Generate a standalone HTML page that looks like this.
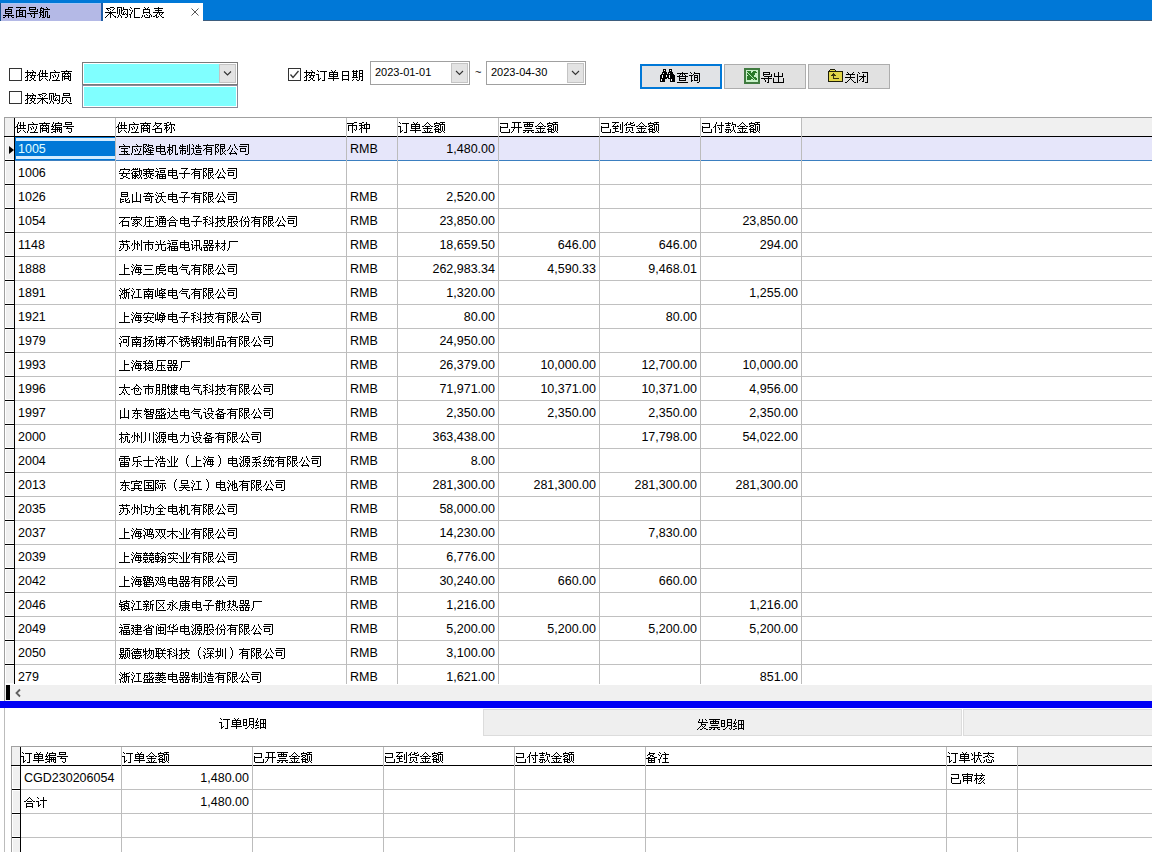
<!DOCTYPE html>
<html><head><meta charset="utf-8"><style>
html,body{margin:0;padding:0;width:1152px;height:852px;overflow:hidden;background:#fff;}
body{position:relative;font-family:"Liberation Sans",sans-serif;color:#000;}
div,svg{position:absolute;}
.t{position:absolute;white-space:nowrap;line-height:14px;font-size:12px;}
</style></head><body>
<div style="left:0px;top:0px;width:1152px;height:21px;background:#0078d7"></div>
<div style="left:0px;top:3px;width:1px;height:18px;background:#1a4f8a"></div>
<div style="left:1px;top:3px;width:100px;height:18px;background:#b4b9e6"></div>
<div style="left:101px;top:3px;width:2px;height:18px;background:#1f5fa8"></div>
<div style="left:103px;top:3px;width:100px;height:18px;background:#fff"></div>
<div style="left:203px;top:20px;width:949px;height:1px;background:#3d5d7e"></div>
<div style="left:1px;top:3px;width:100px;height:1px;background:#a6c6f6"></div>
<svg style="position:absolute;left:190px;top:7px" width="10" height="10"><path d="M1.5 1.5L8.5 8.5M8.5 1.5L1.5 8.5" stroke="#555" stroke-width="1"/></svg>
<div style="left:9px;top:68px;width:13px;height:13px;border:1px solid #333;box-sizing:border-box;background:#fff"></div>
<div style="left:9px;top:91px;width:13px;height:13px;border:1px solid #333;box-sizing:border-box;background:#fff"></div>
<div style="left:288px;top:68px;width:13px;height:13px;border:1px solid #333;box-sizing:border-box;background:#fff"></div>
<svg style="position:absolute;left:288px;top:68px" width="13" height="13"><path d="M2.5 6.5L5 9.5L10.5 3" fill="none" stroke="#333" stroke-width="1.3"/></svg>
<div style="left:82px;top:62px;width:156px;height:23px;border:1px solid #7a7a7a;box-sizing:border-box;background:#fff"></div>
<div style="left:84px;top:64px;width:135px;height:19px;background:#80ffff"></div>
<div style="left:219px;top:64px;width:17px;height:19px;background:#e3e3e3;border:1px solid #c4c4c4;box-sizing:border-box"></div>
<svg style="position:absolute;left:219px;top:64px" width="17" height="19"><path d="M5.0 7.5L8.5 11.0L12.0 7.5" fill="none" stroke="#333" stroke-width="1.1"/></svg>
<div style="left:82px;top:85px;width:156px;height:23px;border:1px solid #8a8a9a;box-sizing:border-box;background:#fff"></div>
<div style="left:84px;top:87px;width:152px;height:19px;background:#80ffff"></div>
<div style="left:370px;top:61px;width:100px;height:24px;border:1px solid #a0a0a0;box-sizing:border-box;background:#fff"></div>
<div style="left:451px;top:63px;width:17px;height:20px;background:#e3e3e3;border:1px solid #c4c4c4;box-sizing:border-box"></div>
<svg style="position:absolute;left:451px;top:63px" width="17" height="20"><path d="M5.0 8.0L8.5 11.5L12.0 8.0" fill="none" stroke="#333" stroke-width="1.1"/></svg>
<span class="t" style="left:375px;top:65px;font-size:11px">2023-01-01</span>
<span class="t" style="left:475px;top:65px;font-size:11px">~</span>
<div style="left:486px;top:61px;width:100px;height:24px;border:1px solid #a0a0a0;box-sizing:border-box;background:#fff"></div>
<div style="left:567px;top:63px;width:17px;height:20px;background:#e3e3e3;border:1px solid #c4c4c4;box-sizing:border-box"></div>
<svg style="position:absolute;left:567px;top:63px" width="17" height="20"><path d="M5.0 8.0L8.5 11.5L12.0 8.0" fill="none" stroke="#333" stroke-width="1.1"/></svg>
<span class="t" style="left:491px;top:65px;font-size:11px">2023-04-30</span>
<div style="left:640px;top:64px;width:82px;height:25px;border:2px solid #0078d7;box-sizing:border-box;background:#e1e3e6"></div>
<svg style="position:absolute;left:660px;top:69px" width="15" height="13" shape-rendering="crispEdges"><path fill="#000" d="M3 0h3v1h-3zM9 0h3v1h-3zM3 1h1v1h-1zM5 1h1v1h-1zM9 1h1v1h-1zM11 1h1v1h-1zM3 2h3v1h-3zM9 2h3v1h-3zM2 3h5v1h-5zM8 3h5v1h-5zM2 4h1v1h-1zM4 4h3v1h-3zM8 4h1v1h-1zM10 4h3v1h-3zM1 5h13v1h-13zM0 6h2v1h-2zM3 6h3v1h-3zM7 6h2v1h-2zM10 6h5v1h-5zM0 7h2v1h-2zM3 7h3v1h-3zM7 7h2v1h-2zM10 7h5v1h-5zM0 8h2v1h-2zM3 8h6v1h-6zM10 8h5v1h-5zM0 9h7v1h-7zM8 9h7v1h-7zM0 10h1v1h-1zM2 10h3v1h-3zM10 10h1v1h-1zM12 10h3v1h-3zM0 11h1v1h-1zM2 11h3v1h-3zM10 11h1v1h-1zM12 11h3v1h-3zM0 12h5v1h-5zM10 12h5v1h-5z"/><path fill="#fff" d="M4 1h1v1h-1zM10 1h1v1h-1zM3 4h1v1h-1zM9 4h1v1h-1zM2 6h1v1h-1zM6 6h1v1h-1zM9 6h1v1h-1zM2 7h1v1h-1zM6 7h1v1h-1zM9 7h1v1h-1zM2 8h1v1h-1zM9 8h1v1h-1zM7 9h1v1h-1zM1 10h1v1h-1zM11 10h1v1h-1zM1 11h1v1h-1zM11 11h1v1h-1z"/></svg>
<div style="left:724px;top:64px;width:82px;height:25px;border:1px solid #adadad;box-sizing:border-box;background:#e1e1e1"></div>
<svg style="position:absolute;left:744px;top:68px" width="16" height="16" shape-rendering="crispEdges"><path fill="#3f7a3f" d="M0 0h16v1h-16zM0 1h16v1h-16zM0 2h2v1h-2zM14 2h2v1h-2zM0 3h2v1h-2zM14 3h2v1h-2zM0 4h2v1h-2zM14 4h2v1h-2zM0 5h2v1h-2zM14 5h2v1h-2zM0 6h2v1h-2zM14 6h2v1h-2zM0 7h2v1h-2zM14 7h2v1h-2zM0 8h2v1h-2zM14 8h2v1h-2zM0 9h2v1h-2zM14 9h2v1h-2zM0 10h2v1h-2zM14 10h2v1h-2zM0 11h2v1h-2zM14 11h2v1h-2zM0 12h2v1h-2zM14 12h2v1h-2zM0 13h2v1h-2zM14 13h2v1h-2zM0 14h16v1h-16zM0 15h16v1h-16z"/><path fill="#c8f0c8" d="M2 2h12v1h-12zM2 3h1v1h-1zM7 3h2v1h-2zM12 3h2v1h-2zM2 4h1v1h-1zM7 4h1v1h-1zM13 4h1v1h-1zM2 5h1v1h-1zM11 5h3v1h-3zM2 6h1v1h-1zM11 6h3v1h-3zM2 7h2v1h-2zM10 7h4v1h-4zM2 8h1v1h-1zM10 8h4v1h-4zM2 9h1v1h-1zM12 9h2v1h-2zM2 10h1v1h-1zM13 10h1v1h-1zM2 11h1v1h-1zM7 11h2v1h-2zM13 11h1v1h-1zM2 12h12v1h-12zM2 13h12v1h-12z"/><path fill="#2a7a2a" d="M3 3h4v1h-4zM9 3h3v1h-3zM4 4h3v1h-3zM8 4h5v1h-5zM3 5h1v1h-1zM5 5h6v1h-6zM3 6h2v1h-2zM6 6h5v1h-5zM4 7h2v1h-2zM7 7h3v1h-3zM3 8h4v1h-4zM8 8h2v1h-2zM3 9h5v1h-5zM9 9h3v1h-3zM3 10h6v1h-6zM10 10h3v1h-3zM3 11h4v1h-4zM9 11h1v1h-1zM11 11h2v1h-2z"/><path fill="#b0e8b0" d="M3 4h1v1h-1zM4 5h1v1h-1zM5 6h1v1h-1zM6 7h1v1h-1zM7 8h1v1h-1zM8 9h1v1h-1zM9 10h1v1h-1zM10 11h1v1h-1z"/></svg>
<div style="left:808px;top:64px;width:82px;height:25px;border:1px solid #adadad;box-sizing:border-box;background:#e1e1e1"></div>
<svg style="position:absolute;left:828px;top:69px" width="15" height="13" shape-rendering="crispEdges"><path fill="#1e1e08" d="M2 0h5v1h-5zM1 1h1v1h-1zM7 1h1v1h-1zM0 2h15v1h-15zM0 3h1v1h-1zM14 3h1v1h-1zM0 4h1v1h-1zM14 4h1v1h-1zM0 5h1v1h-1zM14 5h1v1h-1zM0 6h1v1h-1zM14 6h1v1h-1zM0 7h1v1h-1zM14 7h1v1h-1zM0 8h1v1h-1zM14 8h1v1h-1zM0 9h1v1h-1zM14 9h1v1h-1zM0 10h1v1h-1zM14 10h1v1h-1zM0 11h1v1h-1zM14 11h1v1h-1zM0 12h15v1h-15z"/><path fill="#e2d648" d="M2 1h5v1h-5zM1 3h13v1h-13zM1 4h4v1h-4zM6 4h8v1h-8zM1 5h3v1h-3zM7 5h7v1h-7zM1 6h2v1h-2zM8 6h6v1h-6zM1 7h4v1h-4zM6 7h8v1h-8zM1 8h4v1h-4zM6 8h8v1h-8zM1 9h4v1h-4zM11 9h3v1h-3zM1 10h13v1h-13zM1 11h13v1h-13z"/><path fill="#3a3410" d="M5 4h1v1h-1zM4 5h3v1h-3zM3 6h5v1h-5zM5 7h1v1h-1zM5 8h1v1h-1zM5 9h6v1h-6z"/></svg>
<div style="left:4px;top:117px;width:1148px;height:1px;background:#a0a0a0"></div>
<div style="left:4px;top:117px;width:1px;height:584px;background:#a0a0a0"></div>
<div style="left:5px;top:118px;width:9px;height:18px;background:#f0f0f0"></div>
<div style="left:802px;top:118px;width:350px;height:18px;background:#f0f0f0"></div>
<div style="left:4px;top:136px;width:1148px;height:1px;background:#000"></div>
<div style="left:5px;top:137px;width:9px;height:23px;background:#f0f0f0;border:1px solid #fff;border-right:0;box-sizing:border-box"></div>
<div style="left:5px;top:160px;width:9px;height:1px;background:#000"></div>
<div style="left:15px;top:160px;width:1137px;height:1px;background:#3b7fc0"></div>
<div style="left:15px;top:137px;width:1137px;height:23px;background:#e6e6fa"></div>
<div style="left:15px;top:137px;width:100px;height:23px;background:#0078d7"></div>
<div style="left:16px;top:138px;width:99px;height:3px;background:#d4ecff"></div>
<div style="left:16px;top:156px;width:99px;height:3px;background:#d4ecff"></div>
<span class="t" style="left:18px;top:142px;font-size:12.5px;color:#e0ffff">1005</span>
<span class="t" style="left:350px;top:142px;font-size:12.5px">RMB</span>
<span class="t" style="right:657px;top:142px;font-size:12.5px">1,480.00</span>
<div style="left:5px;top:161px;width:9px;height:23px;background:#f0f0f0;border:1px solid #fff;border-right:0;box-sizing:border-box"></div>
<div style="left:5px;top:184px;width:9px;height:1px;background:#000"></div>
<div style="left:15px;top:184px;width:1137px;height:1px;background:#c0c0c0"></div>
<span class="t" style="left:18px;top:166px;font-size:12.5px">1006</span>
<div style="left:5px;top:185px;width:9px;height:23px;background:#f0f0f0;border:1px solid #fff;border-right:0;box-sizing:border-box"></div>
<div style="left:5px;top:208px;width:9px;height:1px;background:#000"></div>
<div style="left:15px;top:208px;width:1137px;height:1px;background:#c0c0c0"></div>
<span class="t" style="left:18px;top:190px;font-size:12.5px">1026</span>
<span class="t" style="left:350px;top:190px;font-size:12.5px">RMB</span>
<span class="t" style="right:657px;top:190px;font-size:12.5px">2,520.00</span>
<div style="left:5px;top:209px;width:9px;height:23px;background:#f0f0f0;border:1px solid #fff;border-right:0;box-sizing:border-box"></div>
<div style="left:5px;top:232px;width:9px;height:1px;background:#000"></div>
<div style="left:15px;top:232px;width:1137px;height:1px;background:#c0c0c0"></div>
<span class="t" style="left:18px;top:214px;font-size:12.5px">1054</span>
<span class="t" style="left:350px;top:214px;font-size:12.5px">RMB</span>
<span class="t" style="right:657px;top:214px;font-size:12.5px">23,850.00</span>
<span class="t" style="right:354px;top:214px;font-size:12.5px">23,850.00</span>
<div style="left:5px;top:233px;width:9px;height:23px;background:#f0f0f0;border:1px solid #fff;border-right:0;box-sizing:border-box"></div>
<div style="left:5px;top:256px;width:9px;height:1px;background:#000"></div>
<div style="left:15px;top:256px;width:1137px;height:1px;background:#c0c0c0"></div>
<span class="t" style="left:18px;top:238px;font-size:12.5px">1148</span>
<span class="t" style="left:350px;top:238px;font-size:12.5px">RMB</span>
<span class="t" style="right:657px;top:238px;font-size:12.5px">18,659.50</span>
<span class="t" style="right:556px;top:238px;font-size:12.5px">646.00</span>
<span class="t" style="right:455px;top:238px;font-size:12.5px">646.00</span>
<span class="t" style="right:354px;top:238px;font-size:12.5px">294.00</span>
<div style="left:5px;top:257px;width:9px;height:23px;background:#f0f0f0;border:1px solid #fff;border-right:0;box-sizing:border-box"></div>
<div style="left:5px;top:280px;width:9px;height:1px;background:#000"></div>
<div style="left:15px;top:280px;width:1137px;height:1px;background:#c0c0c0"></div>
<span class="t" style="left:18px;top:262px;font-size:12.5px">1888</span>
<span class="t" style="left:350px;top:262px;font-size:12.5px">RMB</span>
<span class="t" style="right:657px;top:262px;font-size:12.5px">262,983.34</span>
<span class="t" style="right:556px;top:262px;font-size:12.5px">4,590.33</span>
<span class="t" style="right:455px;top:262px;font-size:12.5px">9,468.01</span>
<div style="left:5px;top:281px;width:9px;height:23px;background:#f0f0f0;border:1px solid #fff;border-right:0;box-sizing:border-box"></div>
<div style="left:5px;top:304px;width:9px;height:1px;background:#000"></div>
<div style="left:15px;top:304px;width:1137px;height:1px;background:#c0c0c0"></div>
<span class="t" style="left:18px;top:286px;font-size:12.5px">1891</span>
<span class="t" style="left:350px;top:286px;font-size:12.5px">RMB</span>
<span class="t" style="right:657px;top:286px;font-size:12.5px">1,320.00</span>
<span class="t" style="right:354px;top:286px;font-size:12.5px">1,255.00</span>
<div style="left:5px;top:305px;width:9px;height:23px;background:#f0f0f0;border:1px solid #fff;border-right:0;box-sizing:border-box"></div>
<div style="left:5px;top:328px;width:9px;height:1px;background:#000"></div>
<div style="left:15px;top:328px;width:1137px;height:1px;background:#c0c0c0"></div>
<span class="t" style="left:18px;top:310px;font-size:12.5px">1921</span>
<span class="t" style="left:350px;top:310px;font-size:12.5px">RMB</span>
<span class="t" style="right:657px;top:310px;font-size:12.5px">80.00</span>
<span class="t" style="right:455px;top:310px;font-size:12.5px">80.00</span>
<div style="left:5px;top:329px;width:9px;height:23px;background:#f0f0f0;border:1px solid #fff;border-right:0;box-sizing:border-box"></div>
<div style="left:5px;top:352px;width:9px;height:1px;background:#000"></div>
<div style="left:15px;top:352px;width:1137px;height:1px;background:#c0c0c0"></div>
<span class="t" style="left:18px;top:334px;font-size:12.5px">1979</span>
<span class="t" style="left:350px;top:334px;font-size:12.5px">RMB</span>
<span class="t" style="right:657px;top:334px;font-size:12.5px">24,950.00</span>
<div style="left:5px;top:353px;width:9px;height:23px;background:#f0f0f0;border:1px solid #fff;border-right:0;box-sizing:border-box"></div>
<div style="left:5px;top:376px;width:9px;height:1px;background:#000"></div>
<div style="left:15px;top:376px;width:1137px;height:1px;background:#c0c0c0"></div>
<span class="t" style="left:18px;top:358px;font-size:12.5px">1993</span>
<span class="t" style="left:350px;top:358px;font-size:12.5px">RMB</span>
<span class="t" style="right:657px;top:358px;font-size:12.5px">26,379.00</span>
<span class="t" style="right:556px;top:358px;font-size:12.5px">10,000.00</span>
<span class="t" style="right:455px;top:358px;font-size:12.5px">12,700.00</span>
<span class="t" style="right:354px;top:358px;font-size:12.5px">10,000.00</span>
<div style="left:5px;top:377px;width:9px;height:23px;background:#f0f0f0;border:1px solid #fff;border-right:0;box-sizing:border-box"></div>
<div style="left:5px;top:400px;width:9px;height:1px;background:#000"></div>
<div style="left:15px;top:400px;width:1137px;height:1px;background:#c0c0c0"></div>
<span class="t" style="left:18px;top:382px;font-size:12.5px">1996</span>
<span class="t" style="left:350px;top:382px;font-size:12.5px">RMB</span>
<span class="t" style="right:657px;top:382px;font-size:12.5px">71,971.00</span>
<span class="t" style="right:556px;top:382px;font-size:12.5px">10,371.00</span>
<span class="t" style="right:455px;top:382px;font-size:12.5px">10,371.00</span>
<span class="t" style="right:354px;top:382px;font-size:12.5px">4,956.00</span>
<div style="left:5px;top:401px;width:9px;height:23px;background:#f0f0f0;border:1px solid #fff;border-right:0;box-sizing:border-box"></div>
<div style="left:5px;top:424px;width:9px;height:1px;background:#000"></div>
<div style="left:15px;top:424px;width:1137px;height:1px;background:#c0c0c0"></div>
<span class="t" style="left:18px;top:406px;font-size:12.5px">1997</span>
<span class="t" style="left:350px;top:406px;font-size:12.5px">RMB</span>
<span class="t" style="right:657px;top:406px;font-size:12.5px">2,350.00</span>
<span class="t" style="right:556px;top:406px;font-size:12.5px">2,350.00</span>
<span class="t" style="right:455px;top:406px;font-size:12.5px">2,350.00</span>
<span class="t" style="right:354px;top:406px;font-size:12.5px">2,350.00</span>
<div style="left:5px;top:425px;width:9px;height:23px;background:#f0f0f0;border:1px solid #fff;border-right:0;box-sizing:border-box"></div>
<div style="left:5px;top:448px;width:9px;height:1px;background:#000"></div>
<div style="left:15px;top:448px;width:1137px;height:1px;background:#c0c0c0"></div>
<span class="t" style="left:18px;top:430px;font-size:12.5px">2000</span>
<span class="t" style="left:350px;top:430px;font-size:12.5px">RMB</span>
<span class="t" style="right:657px;top:430px;font-size:12.5px">363,438.00</span>
<span class="t" style="right:455px;top:430px;font-size:12.5px">17,798.00</span>
<span class="t" style="right:354px;top:430px;font-size:12.5px">54,022.00</span>
<div style="left:5px;top:449px;width:9px;height:23px;background:#f0f0f0;border:1px solid #fff;border-right:0;box-sizing:border-box"></div>
<div style="left:5px;top:472px;width:9px;height:1px;background:#000"></div>
<div style="left:15px;top:472px;width:1137px;height:1px;background:#c0c0c0"></div>
<span class="t" style="left:18px;top:454px;font-size:12.5px">2004</span>
<span class="t" style="left:350px;top:454px;font-size:12.5px">RMB</span>
<span class="t" style="right:657px;top:454px;font-size:12.5px">8.00</span>
<div style="left:5px;top:473px;width:9px;height:23px;background:#f0f0f0;border:1px solid #fff;border-right:0;box-sizing:border-box"></div>
<div style="left:5px;top:496px;width:9px;height:1px;background:#000"></div>
<div style="left:15px;top:496px;width:1137px;height:1px;background:#c0c0c0"></div>
<span class="t" style="left:18px;top:478px;font-size:12.5px">2013</span>
<span class="t" style="left:350px;top:478px;font-size:12.5px">RMB</span>
<span class="t" style="right:657px;top:478px;font-size:12.5px">281,300.00</span>
<span class="t" style="right:556px;top:478px;font-size:12.5px">281,300.00</span>
<span class="t" style="right:455px;top:478px;font-size:12.5px">281,300.00</span>
<span class="t" style="right:354px;top:478px;font-size:12.5px">281,300.00</span>
<div style="left:5px;top:497px;width:9px;height:23px;background:#f0f0f0;border:1px solid #fff;border-right:0;box-sizing:border-box"></div>
<div style="left:5px;top:520px;width:9px;height:1px;background:#000"></div>
<div style="left:15px;top:520px;width:1137px;height:1px;background:#c0c0c0"></div>
<span class="t" style="left:18px;top:502px;font-size:12.5px">2035</span>
<span class="t" style="left:350px;top:502px;font-size:12.5px">RMB</span>
<span class="t" style="right:657px;top:502px;font-size:12.5px">58,000.00</span>
<div style="left:5px;top:521px;width:9px;height:23px;background:#f0f0f0;border:1px solid #fff;border-right:0;box-sizing:border-box"></div>
<div style="left:5px;top:544px;width:9px;height:1px;background:#000"></div>
<div style="left:15px;top:544px;width:1137px;height:1px;background:#c0c0c0"></div>
<span class="t" style="left:18px;top:526px;font-size:12.5px">2037</span>
<span class="t" style="left:350px;top:526px;font-size:12.5px">RMB</span>
<span class="t" style="right:657px;top:526px;font-size:12.5px">14,230.00</span>
<span class="t" style="right:455px;top:526px;font-size:12.5px">7,830.00</span>
<div style="left:5px;top:545px;width:9px;height:23px;background:#f0f0f0;border:1px solid #fff;border-right:0;box-sizing:border-box"></div>
<div style="left:5px;top:568px;width:9px;height:1px;background:#000"></div>
<div style="left:15px;top:568px;width:1137px;height:1px;background:#c0c0c0"></div>
<span class="t" style="left:18px;top:550px;font-size:12.5px">2039</span>
<span class="t" style="left:350px;top:550px;font-size:12.5px">RMB</span>
<span class="t" style="right:657px;top:550px;font-size:12.5px">6,776.00</span>
<div style="left:5px;top:569px;width:9px;height:23px;background:#f0f0f0;border:1px solid #fff;border-right:0;box-sizing:border-box"></div>
<div style="left:5px;top:592px;width:9px;height:1px;background:#000"></div>
<div style="left:15px;top:592px;width:1137px;height:1px;background:#c0c0c0"></div>
<span class="t" style="left:18px;top:574px;font-size:12.5px">2042</span>
<span class="t" style="left:350px;top:574px;font-size:12.5px">RMB</span>
<span class="t" style="right:657px;top:574px;font-size:12.5px">30,240.00</span>
<span class="t" style="right:556px;top:574px;font-size:12.5px">660.00</span>
<span class="t" style="right:455px;top:574px;font-size:12.5px">660.00</span>
<div style="left:5px;top:593px;width:9px;height:23px;background:#f0f0f0;border:1px solid #fff;border-right:0;box-sizing:border-box"></div>
<div style="left:5px;top:616px;width:9px;height:1px;background:#000"></div>
<div style="left:15px;top:616px;width:1137px;height:1px;background:#c0c0c0"></div>
<span class="t" style="left:18px;top:598px;font-size:12.5px">2046</span>
<span class="t" style="left:350px;top:598px;font-size:12.5px">RMB</span>
<span class="t" style="right:657px;top:598px;font-size:12.5px">1,216.00</span>
<span class="t" style="right:354px;top:598px;font-size:12.5px">1,216.00</span>
<div style="left:5px;top:617px;width:9px;height:23px;background:#f0f0f0;border:1px solid #fff;border-right:0;box-sizing:border-box"></div>
<div style="left:5px;top:640px;width:9px;height:1px;background:#000"></div>
<div style="left:15px;top:640px;width:1137px;height:1px;background:#c0c0c0"></div>
<span class="t" style="left:18px;top:622px;font-size:12.5px">2049</span>
<span class="t" style="left:350px;top:622px;font-size:12.5px">RMB</span>
<span class="t" style="right:657px;top:622px;font-size:12.5px">5,200.00</span>
<span class="t" style="right:556px;top:622px;font-size:12.5px">5,200.00</span>
<span class="t" style="right:455px;top:622px;font-size:12.5px">5,200.00</span>
<span class="t" style="right:354px;top:622px;font-size:12.5px">5,200.00</span>
<div style="left:5px;top:641px;width:9px;height:23px;background:#f0f0f0;border:1px solid #fff;border-right:0;box-sizing:border-box"></div>
<div style="left:5px;top:664px;width:9px;height:1px;background:#000"></div>
<div style="left:15px;top:664px;width:1137px;height:1px;background:#c0c0c0"></div>
<span class="t" style="left:18px;top:646px;font-size:12.5px">2050</span>
<span class="t" style="left:350px;top:646px;font-size:12.5px">RMB</span>
<span class="t" style="right:657px;top:646px;font-size:12.5px">3,100.00</span>
<div style="left:5px;top:665px;width:9px;height:19px;background:#f0f0f0;border:1px solid #fff;border-right:0;box-sizing:border-box"></div>
<span class="t" style="left:18px;top:670px;font-size:12.5px">279</span>
<span class="t" style="left:350px;top:670px;font-size:12.5px">RMB</span>
<span class="t" style="right:657px;top:670px;font-size:12.5px">1,621.00</span>
<span class="t" style="right:354px;top:670px;font-size:12.5px">851.00</span>
<div style="left:14px;top:118px;width:1px;height:566px;background:#000"></div>
<div style="left:115px;top:118px;width:1px;height:566px;background:#bcbcbc"></div>
<div style="left:346px;top:118px;width:1px;height:566px;background:#bcbcbc"></div>
<div style="left:397px;top:118px;width:1px;height:566px;background:#bcbcbc"></div>
<div style="left:498px;top:118px;width:1px;height:566px;background:#bcbcbc"></div>
<div style="left:599px;top:118px;width:1px;height:566px;background:#bcbcbc"></div>
<div style="left:700px;top:118px;width:1px;height:566px;background:#bcbcbc"></div>
<div style="left:801px;top:118px;width:1px;height:566px;background:#bcbcbc"></div>
<div style="left:9px;top:146px;width:0;height:0;border-left:5px solid #000;border-top:4px solid transparent;border-bottom:4px solid transparent"></div>
<div style="left:5px;top:685px;width:1147px;height:16px;background:#f0f0f0"></div>
<div style="left:6px;top:685px;width:4px;height:15px;background:#000"></div>
<svg style="position:absolute;left:14px;top:688px" width="9" height="10"><path d="M6 1.5L2.5 5L6 8.5" fill="none" stroke="#606060" stroke-width="1.8"/></svg>
<div style="left:0px;top:701px;width:1152px;height:7px;background:#0000f5"></div>
<div style="left:4px;top:708px;width:1px;height:144px;background:#bcbcbc"></div>
<div style="left:483px;top:709px;width:479px;height:27px;background:#efefef;border:1px solid #dcdcdc;box-sizing:border-box"></div>
<div style="left:963px;top:709px;width:200px;height:27px;background:#efefef;border:1px solid #dcdcdc;box-sizing:border-box"></div>
<div style="left:11px;top:746px;width:1141px;height:1px;background:#a0a0a0"></div>
<div style="left:11px;top:746px;width:1px;height:106px;background:#a0a0a0"></div>
<div style="left:12px;top:747px;width:8px;height:18px;background:#f0f0f0"></div>
<div style="left:1018px;top:747px;width:134px;height:18px;background:#f0f0f0"></div>
<div style="left:11px;top:765px;width:1141px;height:1px;background:#000"></div>
<div style="left:12px;top:766px;width:8px;height:23px;background:#f0f0f0;border:1px solid #fff;border-right:0;box-sizing:border-box"></div>
<div style="left:12px;top:789px;width:8px;height:1px;background:#000"></div>
<div style="left:21px;top:789px;width:1131px;height:1px;background:#c0c0c0"></div>
<span class="t" style="left:24px;top:771px;font-size:12.5px">CGD230206054</span>
<span class="t" style="right:903px;top:771px;font-size:12.5px">1,480.00</span>
<div style="left:12px;top:790px;width:8px;height:23px;background:#f0f0f0;border:1px solid #fff;border-right:0;box-sizing:border-box"></div>
<div style="left:12px;top:813px;width:8px;height:1px;background:#000"></div>
<div style="left:21px;top:813px;width:1131px;height:1px;background:#c0c0c0"></div>
<span class="t" style="right:903px;top:795px;font-size:12.5px">1,480.00</span>
<div style="left:12px;top:814px;width:8px;height:23px;background:#f0f0f0;border:1px solid #fff;border-right:0;box-sizing:border-box"></div>
<div style="left:12px;top:837px;width:8px;height:1px;background:#000"></div>
<div style="left:21px;top:837px;width:1131px;height:1px;background:#c0c0c0"></div>
<div style="left:12px;top:838px;width:8px;height:23px;background:#f0f0f0;border:1px solid #fff;border-right:0;box-sizing:border-box"></div>
<div style="left:20px;top:747px;width:1px;height:105px;background:#000"></div>
<div style="left:121px;top:747px;width:1px;height:105px;background:#bcbcbc"></div>
<div style="left:252px;top:747px;width:1px;height:105px;background:#bcbcbc"></div>
<div style="left:383px;top:747px;width:1px;height:105px;background:#bcbcbc"></div>
<div style="left:514px;top:747px;width:1px;height:105px;background:#bcbcbc"></div>
<div style="left:645px;top:747px;width:1px;height:105px;background:#bcbcbc"></div>
<div style="left:946px;top:747px;width:1px;height:105px;background:#bcbcbc"></div>
<div style="left:1017px;top:747px;width:1px;height:105px;background:#bcbcbc"></div>
<svg width="1152" height="852" style="left:0;top:0" shape-rendering="crispEdges"><defs><path id="g0" d="M5 2h5v1h-5zM5 3h1v1h-1zM2 4h7v1h-7zM2 5h1v1h-1zM8 5h1v1h-1zM2 6h7v1h-7zM2 7h1v1h-1zM8 7h1v1h-1zM2 8h7v1h-7zM5 9h1v1h-1zM0 10h11v1h-11zM2 11h1v1h-1zM5 11h1v1h-1zM8 11h1v1h-1zM0 12h2v1h-2zM5 12h1v1h-1zM9 12h2v1h-2z"/><path id="g1" d="M1 2h10v1h-10zM5 3h1v1h-1zM4 4h1v1h-1zM1 5h10v1h-10zM1 6h1v1h-1zM4 6h1v1h-1zM7 6h1v1h-1zM10 6h1v1h-1zM1 7h1v1h-1zM4 7h4v1h-4zM10 7h1v1h-1zM1 8h1v1h-1zM4 8h1v1h-1zM7 8h1v1h-1zM10 8h1v1h-1zM1 9h1v1h-1zM4 9h4v1h-4zM10 9h1v1h-1zM1 10h1v1h-1zM4 10h1v1h-1zM7 10h1v1h-1zM10 10h1v1h-1zM1 11h10v1h-10zM1 12h1v1h-1zM10 12h1v1h-1z"/><path id="g2" d="M2 2h7v1h-7zM2 3h1v1h-1zM8 3h1v1h-1zM2 4h7v1h-7zM10 4h1v1h-1zM2 5h1v1h-1zM10 5h1v1h-1zM3 6h8v1h-8zM7 7h1v1h-1zM0 8h11v1h-11zM3 9h1v1h-1zM7 9h1v1h-1zM4 10h1v1h-1zM7 10h1v1h-1zM4 11h1v1h-1zM7 11h1v1h-1zM6 12h2v1h-2z"/><path id="g3" d="M2 2h1v1h-1zM7 2h1v1h-1zM1 3h4v1h-4zM8 3h1v1h-1zM1 4h1v1h-1zM4 4h7v1h-7zM1 5h2v1h-2zM4 5h1v1h-1zM1 6h1v1h-1zM3 6h2v1h-2zM6 6h3v1h-3zM0 7h5v1h-5zM6 7h1v1h-1zM8 7h1v1h-1zM1 8h1v1h-1zM4 8h1v1h-1zM6 8h1v1h-1zM8 8h1v1h-1zM1 9h2v1h-2zM4 9h1v1h-1zM6 9h1v1h-1zM8 9h1v1h-1zM1 10h1v1h-1zM3 10h2v1h-2zM6 10h1v1h-1zM8 10h1v1h-1zM10 10h1v1h-1zM1 11h1v1h-1zM4 11h1v1h-1zM6 11h1v1h-1zM8 11h1v1h-1zM10 11h1v1h-1zM0 12h1v1h-1zM3 12h3v1h-3zM8 12h3v1h-3z"/><path id="g4" d="M5 2h4v1h-4zM1 3h4v1h-4zM9 3h1v1h-1zM2 4h1v1h-1zM5 4h1v1h-1zM8 4h1v1h-1zM3 5h1v1h-1zM7 5h1v1h-1zM5 6h1v1h-1zM0 7h11v1h-11zM4 8h3v1h-3zM3 9h1v1h-1zM5 9h1v1h-1zM7 9h1v1h-1zM2 10h1v1h-1zM5 10h1v1h-1zM8 10h1v1h-1zM1 11h1v1h-1zM5 11h1v1h-1zM9 11h2v1h-2zM0 12h1v1h-1zM5 12h1v1h-1zM10 12h1v1h-1z"/><path id="g5" d="M0 2h5v1h-5zM6 2h1v1h-1zM0 3h1v1h-1zM4 3h1v1h-1zM6 3h1v1h-1zM0 4h1v1h-1zM2 4h1v1h-1zM4 4h1v1h-1zM6 4h5v1h-5zM0 5h1v1h-1zM2 5h1v1h-1zM4 5h2v1h-2zM10 5h1v1h-1zM0 6h1v1h-1zM2 6h1v1h-1zM4 6h1v1h-1zM7 6h1v1h-1zM10 6h1v1h-1zM0 7h1v1h-1zM2 7h1v1h-1zM4 7h1v1h-1zM6 7h1v1h-1zM10 7h1v1h-1zM0 8h1v1h-1zM2 8h1v1h-1zM4 8h1v1h-1zM6 8h1v1h-1zM8 8h1v1h-1zM10 8h1v1h-1zM2 9h1v1h-1zM5 9h3v1h-3zM9 9h2v1h-2zM1 10h1v1h-1zM3 10h1v1h-1zM10 10h1v1h-1zM1 11h1v1h-1zM4 11h1v1h-1zM10 11h1v1h-1zM0 12h1v1h-1zM4 12h1v1h-1zM8 12h2v1h-2z"/><path id="g6" d="M1 2h1v1h-1zM2 3h1v1h-1zM5 3h6v1h-6zM0 4h1v1h-1zM5 4h1v1h-1zM1 5h1v1h-1zM3 5h1v1h-1zM5 5h1v1h-1zM3 6h1v1h-1zM5 6h1v1h-1zM2 7h1v1h-1zM5 7h1v1h-1zM2 8h1v1h-1zM5 8h1v1h-1zM0 9h2v1h-2zM5 9h1v1h-1zM1 10h1v1h-1zM5 10h1v1h-1zM1 11h1v1h-1zM5 11h1v1h-1zM1 12h1v1h-1zM5 12h6v1h-6z"/><path id="g7" d="M3 2h1v1h-1zM7 2h1v1h-1zM4 3h1v1h-1zM6 3h1v1h-1zM2 4h7v1h-7zM2 5h1v1h-1zM8 5h1v1h-1zM2 6h1v1h-1zM8 6h1v1h-1zM2 7h7v1h-7zM2 8h1v1h-1zM8 8h1v1h-1zM5 9h1v1h-1zM9 9h1v1h-1zM1 10h1v1h-1zM3 10h1v1h-1zM6 10h1v1h-1zM8 10h1v1h-1zM10 10h1v1h-1zM1 11h1v1h-1zM3 11h1v1h-1zM8 11h1v1h-1zM10 11h1v1h-1zM0 12h1v1h-1zM4 12h5v1h-5z"/><path id="g8" d="M5 2h1v1h-1zM1 3h9v1h-9zM5 4h1v1h-1zM2 5h7v1h-7zM5 6h1v1h-1zM0 7h11v1h-11zM4 8h1v1h-1zM6 8h1v1h-1zM9 8h1v1h-1zM3 9h1v1h-1zM6 9h1v1h-1zM8 9h1v1h-1zM2 10h2v1h-2zM7 10h1v1h-1zM0 11h2v1h-2zM3 11h1v1h-1zM5 11h1v1h-1zM8 11h1v1h-1zM3 12h2v1h-2zM9 12h2v1h-2z"/><path id="g9" d="M2 2h1v1h-1zM7 2h1v1h-1zM2 3h1v1h-1zM8 3h1v1h-1zM0 4h11v1h-11zM2 5h1v1h-1zM5 5h1v1h-1zM7 5h1v1h-1zM10 5h1v1h-1zM2 6h1v1h-1zM4 6h1v1h-1zM7 6h1v1h-1zM2 7h2v1h-2zM5 7h6v1h-6zM1 8h2v1h-2zM6 8h1v1h-1zM9 8h1v1h-1zM0 9h1v1h-1zM2 9h1v1h-1zM5 9h2v1h-2zM9 9h1v1h-1zM2 10h1v1h-1zM7 10h2v1h-2zM2 11h1v1h-1zM6 11h1v1h-1zM8 11h1v1h-1zM0 12h3v1h-3zM4 12h2v1h-2zM9 12h2v1h-2z"/><path id="g10" d="M3 2h1v1h-1zM5 2h1v1h-1zM8 2h1v1h-1zM3 3h1v1h-1zM5 3h1v1h-1zM8 3h1v1h-1zM2 4h1v1h-1zM5 4h1v1h-1zM8 4h1v1h-1zM2 5h1v1h-1zM4 5h7v1h-7zM1 6h2v1h-2zM5 6h1v1h-1zM8 6h1v1h-1zM0 7h1v1h-1zM2 7h1v1h-1zM5 7h1v1h-1zM8 7h1v1h-1zM2 8h9v1h-9zM2 9h1v1h-1zM2 10h1v1h-1zM5 10h1v1h-1zM8 10h1v1h-1zM2 11h1v1h-1zM4 11h1v1h-1zM9 11h1v1h-1zM2 12h2v1h-2zM10 12h1v1h-1z"/><path id="g11" d="M5 2h1v1h-1zM6 3h1v1h-1zM1 4h10v1h-10zM1 5h1v1h-1zM1 6h1v1h-1zM5 6h1v1h-1zM9 6h1v1h-1zM1 7h1v1h-1zM3 7h1v1h-1zM6 7h1v1h-1zM9 7h1v1h-1zM1 8h1v1h-1zM4 8h1v1h-1zM6 8h1v1h-1zM9 8h1v1h-1zM1 9h1v1h-1zM4 9h1v1h-1zM8 9h1v1h-1zM1 10h1v1h-1zM8 10h1v1h-1zM0 11h1v1h-1zM7 11h1v1h-1zM0 12h1v1h-1zM3 12h8v1h-8z"/><path id="g12" d="M5 2h1v1h-1zM0 3h11v1h-11zM3 4h1v1h-1zM7 4h1v1h-1zM1 5h9v1h-9zM1 6h1v1h-1zM4 6h1v1h-1zM6 6h1v1h-1zM9 6h1v1h-1zM1 7h1v1h-1zM3 7h1v1h-1zM7 7h1v1h-1zM9 7h1v1h-1zM1 8h9v1h-9zM1 9h1v1h-1zM3 9h1v1h-1zM7 9h1v1h-1zM9 9h1v1h-1zM1 10h1v1h-1zM3 10h5v1h-5zM9 10h1v1h-1zM1 11h1v1h-1zM3 11h1v1h-1zM7 11h1v1h-1zM9 11h1v1h-1zM1 12h1v1h-1zM8 12h2v1h-2z"/><path id="g13" d="M2 2h7v1h-7zM2 3h1v1h-1zM8 3h1v1h-1zM2 4h7v1h-7zM1 6h9v1h-9zM1 7h1v1h-1zM9 7h1v1h-1zM1 8h1v1h-1zM5 8h1v1h-1zM9 8h1v1h-1zM1 9h1v1h-1zM5 9h1v1h-1zM9 9h1v1h-1zM1 10h1v1h-1zM4 10h1v1h-1zM6 10h1v1h-1zM9 10h1v1h-1zM3 11h1v1h-1zM7 11h1v1h-1zM0 12h3v1h-3zM8 12h3v1h-3z"/><path id="g14" d="M1 2h1v1h-1zM2 3h1v1h-1zM4 3h7v1h-7zM8 4h1v1h-1zM8 5h1v1h-1zM0 6h3v1h-3zM8 6h1v1h-1zM2 7h1v1h-1zM8 7h1v1h-1zM2 8h1v1h-1zM8 8h1v1h-1zM2 9h1v1h-1zM8 9h1v1h-1zM2 10h1v1h-1zM4 10h1v1h-1zM8 10h1v1h-1zM2 11h2v1h-2zM8 11h1v1h-1zM2 12h1v1h-1zM6 12h3v1h-3z"/><path id="g15" d="M3 2h1v1h-1zM7 2h1v1h-1zM4 3h1v1h-1zM6 3h1v1h-1zM1 4h9v1h-9zM1 5h1v1h-1zM5 5h1v1h-1zM9 5h1v1h-1zM1 6h9v1h-9zM1 7h1v1h-1zM5 7h1v1h-1zM9 7h1v1h-1zM1 8h9v1h-9zM5 9h1v1h-1zM0 10h11v1h-11zM5 11h1v1h-1zM5 12h1v1h-1z"/><path id="g16" d="M2 3h7v1h-7zM2 4h1v1h-1zM8 4h1v1h-1zM2 5h1v1h-1zM8 5h1v1h-1zM2 6h1v1h-1zM8 6h1v1h-1zM2 7h7v1h-7zM2 8h1v1h-1zM8 8h1v1h-1zM2 9h1v1h-1zM8 9h1v1h-1zM2 10h1v1h-1zM8 10h1v1h-1zM2 11h7v1h-7zM2 12h1v1h-1zM8 12h1v1h-1z"/><path id="g17" d="M1 2h1v1h-1zM4 2h1v1h-1zM7 2h4v1h-4zM0 3h6v1h-6zM7 3h1v1h-1zM10 3h1v1h-1zM1 4h1v1h-1zM4 4h1v1h-1zM7 4h1v1h-1zM10 4h1v1h-1zM1 5h4v1h-4zM7 5h4v1h-4zM1 6h1v1h-1zM4 6h1v1h-1zM7 6h1v1h-1zM10 6h1v1h-1zM1 7h4v1h-4zM7 7h1v1h-1zM10 7h1v1h-1zM1 8h1v1h-1zM4 8h1v1h-1zM7 8h4v1h-4zM0 9h6v1h-6zM7 9h1v1h-1zM10 9h1v1h-1zM7 10h1v1h-1zM10 10h1v1h-1zM1 11h1v1h-1zM4 11h1v1h-1zM7 11h1v1h-1zM10 11h1v1h-1zM0 12h1v1h-1zM5 12h2v1h-2zM9 12h2v1h-2z"/><path id="g18" d="M5 2h1v1h-1zM0 3h11v1h-11zM3 4h1v1h-1zM5 4h1v1h-1zM7 4h1v1h-1zM2 5h1v1h-1zM5 5h1v1h-1zM8 5h1v1h-1zM0 6h11v1h-11zM2 7h1v1h-1zM8 7h1v1h-1zM2 8h7v1h-7zM2 9h1v1h-1zM8 9h1v1h-1zM2 10h7v1h-7zM0 12h11v1h-11z"/><path id="g19" d="M1 2h1v1h-1zM5 2h1v1h-1zM2 3h1v1h-1zM5 3h6v1h-6zM4 4h1v1h-1zM10 4h1v1h-1zM0 5h4v1h-4zM5 5h4v1h-4zM10 5h1v1h-1zM2 6h1v1h-1zM5 6h1v1h-1zM8 6h1v1h-1zM10 6h1v1h-1zM2 7h1v1h-1zM5 7h4v1h-4zM10 7h1v1h-1zM2 8h1v1h-1zM5 8h1v1h-1zM8 8h1v1h-1zM10 8h1v1h-1zM2 9h1v1h-1zM5 9h1v1h-1zM8 9h1v1h-1zM10 9h1v1h-1zM2 10h2v1h-2zM5 10h4v1h-4zM10 10h1v1h-1zM2 11h1v1h-1zM10 11h1v1h-1zM8 12h2v1h-2z"/><path id="g20" d="M5 2h1v1h-1zM1 3h1v1h-1zM5 3h1v1h-1zM9 3h1v1h-1zM1 4h1v1h-1zM5 4h1v1h-1zM9 4h1v1h-1zM1 5h1v1h-1zM5 5h1v1h-1zM9 5h1v1h-1zM1 6h9v1h-9zM5 7h1v1h-1zM0 8h1v1h-1zM5 8h1v1h-1zM10 8h1v1h-1zM0 9h1v1h-1zM5 9h1v1h-1zM10 9h1v1h-1zM0 10h1v1h-1zM5 10h1v1h-1zM10 10h1v1h-1zM0 11h1v1h-1zM5 11h1v1h-1zM10 11h1v1h-1zM0 12h11v1h-11z"/><path id="g21" d="M2 2h1v1h-1zM8 2h1v1h-1zM3 3h1v1h-1zM7 3h1v1h-1zM1 4h9v1h-9zM5 5h1v1h-1zM5 6h1v1h-1zM0 7h10v1h-10zM5 8h1v1h-1zM4 9h1v1h-1zM6 9h1v1h-1zM3 10h1v1h-1zM7 10h1v1h-1zM2 11h1v1h-1zM8 11h1v1h-1zM0 12h2v1h-2zM9 12h2v1h-2z"/><path id="g22" d="M1 2h1v1h-1zM5 2h6v1h-6zM2 3h1v1h-1zM10 3h1v1h-1zM0 4h1v1h-1zM6 4h1v1h-1zM10 4h1v1h-1zM0 5h1v1h-1zM6 5h1v1h-1zM10 5h1v1h-1zM0 6h1v1h-1zM2 6h7v1h-7zM10 6h1v1h-1zM0 7h1v1h-1zM5 7h2v1h-2zM10 7h1v1h-1zM0 8h1v1h-1zM4 8h1v1h-1zM6 8h1v1h-1zM10 8h1v1h-1zM0 9h1v1h-1zM3 9h1v1h-1zM6 9h1v1h-1zM10 9h1v1h-1zM0 10h1v1h-1zM2 10h1v1h-1zM6 10h1v1h-1zM10 10h1v1h-1zM0 11h1v1h-1zM5 11h2v1h-2zM10 11h1v1h-1zM0 12h1v1h-1zM8 12h3v1h-3z"/><path id="g23" d="M2 2h1v1h-1zM7 2h1v1h-1zM2 3h1v1h-1zM4 3h7v1h-7zM1 4h1v1h-1zM4 4h1v1h-1zM10 4h1v1h-1zM1 5h1v1h-1zM3 5h8v1h-8zM0 6h3v1h-3zM4 6h1v1h-1zM2 7h1v1h-1zM4 7h7v1h-7zM1 8h1v1h-1zM4 8h1v1h-1zM6 8h1v1h-1zM8 8h1v1h-1zM10 8h1v1h-1zM0 9h11v1h-11zM4 10h1v1h-1zM6 10h1v1h-1zM8 10h1v1h-1zM10 10h1v1h-1zM2 11h3v1h-3zM6 11h1v1h-1zM8 11h1v1h-1zM10 11h1v1h-1zM0 12h2v1h-2zM4 12h1v1h-1zM9 12h2v1h-2z"/><path id="g24" d="M2 2h7v1h-7zM2 3h1v1h-1zM8 3h1v1h-1zM2 4h7v1h-7zM0 6h11v1h-11zM4 7h1v1h-1zM3 8h6v1h-6zM8 9h1v1h-1zM8 10h1v1h-1zM5 11h1v1h-1zM8 11h1v1h-1zM6 12h2v1h-2z"/><path id="g25" d="M3 2h1v1h-1zM3 3h7v1h-7zM3 4h1v1h-1zM8 4h1v1h-1zM2 5h1v1h-1zM4 5h1v1h-1zM7 5h1v1h-1zM1 6h1v1h-1zM5 6h2v1h-2zM5 7h1v1h-1zM3 8h7v1h-7zM0 9h4v1h-4zM9 9h1v1h-1zM3 10h1v1h-1zM9 10h1v1h-1zM3 11h1v1h-1zM9 11h1v1h-1zM3 12h7v1h-7z"/><path id="g26" d="M3 2h2v1h-2zM6 2h1v1h-1zM0 3h3v1h-3zM6 3h1v1h-1zM2 4h1v1h-1zM5 4h6v1h-6zM0 5h5v1h-5zM7 5h1v1h-1zM10 5h1v1h-1zM2 6h1v1h-1zM7 6h1v1h-1zM1 7h3v1h-3zM5 7h1v1h-1zM7 7h1v1h-1zM9 7h1v1h-1zM1 8h2v1h-2zM5 8h1v1h-1zM7 8h1v1h-1zM9 8h1v1h-1zM0 9h1v1h-1zM2 9h1v1h-1zM4 9h1v1h-1zM7 9h1v1h-1zM10 9h1v1h-1zM2 10h2v1h-2zM7 10h1v1h-1zM10 10h1v1h-1zM2 11h1v1h-1zM7 11h1v1h-1zM2 12h1v1h-1zM6 12h2v1h-2z"/><path id="g27" d="M7 2h3v1h-3zM0 3h7v1h-7zM5 4h1v1h-1zM1 5h9v1h-9zM1 6h1v1h-1zM5 6h1v1h-1zM9 6h1v1h-1zM1 7h1v1h-1zM5 7h1v1h-1zM9 7h1v1h-1zM1 8h1v1h-1zM5 8h1v1h-1zM9 8h1v1h-1zM1 9h1v1h-1zM5 9h1v1h-1zM7 9h1v1h-1zM9 9h1v1h-1zM1 10h1v1h-1zM5 10h1v1h-1zM8 10h1v1h-1zM5 11h1v1h-1zM5 12h1v1h-1z"/><path id="g28" d="M3 2h2v1h-2zM7 2h1v1h-1zM0 3h3v1h-3zM7 3h1v1h-1zM2 4h1v1h-1zM5 4h6v1h-6zM0 5h6v1h-6zM7 5h1v1h-1zM10 5h1v1h-1zM2 6h1v1h-1zM5 6h1v1h-1zM7 6h1v1h-1zM10 6h1v1h-1zM2 7h2v1h-2zM5 7h1v1h-1zM7 7h1v1h-1zM10 7h1v1h-1zM1 8h2v1h-2zM4 8h7v1h-7zM0 9h1v1h-1zM2 9h1v1h-1zM7 9h1v1h-1zM2 10h1v1h-1zM7 10h1v1h-1zM2 11h1v1h-1zM7 11h1v1h-1zM2 12h1v1h-1zM7 12h1v1h-1z"/><path id="g29" d="M5 2h1v1h-1zM4 3h1v1h-1zM6 3h1v1h-1zM3 4h1v1h-1zM7 4h1v1h-1zM2 5h1v1h-1zM8 5h1v1h-1zM0 6h2v1h-2zM3 6h5v1h-5zM9 6h2v1h-2zM5 7h1v1h-1zM1 8h9v1h-9zM5 9h1v1h-1zM2 10h1v1h-1zM5 10h1v1h-1zM8 10h1v1h-1zM3 11h1v1h-1zM5 11h1v1h-1zM7 11h1v1h-1zM0 12h11v1h-11z"/><path id="g30" d="M2 2h1v1h-1zM6 2h5v1h-5zM0 3h6v1h-6zM8 3h1v1h-1zM0 4h1v1h-1zM5 4h6v1h-6zM1 5h4v1h-4zM6 5h1v1h-1zM10 5h1v1h-1zM0 6h2v1h-2zM4 6h1v1h-1zM6 6h1v1h-1zM8 6h1v1h-1zM10 6h1v1h-1zM2 7h2v1h-2zM6 7h1v1h-1zM8 7h1v1h-1zM10 7h1v1h-1zM1 8h1v1h-1zM4 8h1v1h-1zM6 8h1v1h-1zM8 8h1v1h-1zM10 8h1v1h-1zM0 9h7v1h-7zM8 9h1v1h-1zM10 9h1v1h-1zM1 10h1v1h-1zM4 10h1v1h-1zM6 10h1v1h-1zM8 10h1v1h-1zM10 10h1v1h-1zM1 11h4v1h-4zM7 11h1v1h-1zM9 11h1v1h-1zM1 12h1v1h-1zM4 12h3v1h-3zM10 12h1v1h-1z"/><path id="g31" d="M1 3h8v1h-8zM8 4h1v1h-1zM8 5h1v1h-1zM1 6h1v1h-1zM8 6h1v1h-1zM1 7h8v1h-8zM1 8h1v1h-1zM1 9h1v1h-1zM10 9h1v1h-1zM1 10h1v1h-1zM10 10h1v1h-1zM1 11h1v1h-1zM10 11h1v1h-1zM2 12h9v1h-9z"/><path id="g32" d="M1 2h9v1h-9zM3 3h1v1h-1zM7 3h1v1h-1zM3 4h1v1h-1zM7 4h1v1h-1zM3 5h1v1h-1zM7 5h1v1h-1zM3 6h1v1h-1zM7 6h1v1h-1zM0 7h11v1h-11zM3 8h1v1h-1zM7 8h1v1h-1zM2 9h1v1h-1zM7 9h1v1h-1zM2 10h1v1h-1zM7 10h1v1h-1zM1 11h1v1h-1zM7 11h1v1h-1zM0 12h1v1h-1zM7 12h1v1h-1z"/><path id="g33" d="M0 2h11v1h-11zM4 3h1v1h-1zM6 3h1v1h-1zM1 4h9v1h-9zM1 5h1v1h-1zM4 5h1v1h-1zM6 5h1v1h-1zM9 5h1v1h-1zM1 6h9v1h-9zM2 8h7v1h-7zM0 10h11v1h-11zM2 11h1v1h-1zM5 11h1v1h-1zM8 11h1v1h-1zM0 12h2v1h-2zM4 12h2v1h-2zM9 12h2v1h-2z"/><path id="g34" d="M0 2h7v1h-7zM10 2h1v1h-1zM3 3h1v1h-1zM10 3h1v1h-1zM2 4h1v1h-1zM8 4h1v1h-1zM10 4h1v1h-1zM1 5h1v1h-1zM5 5h1v1h-1zM8 5h1v1h-1zM10 5h1v1h-1zM0 6h7v1h-7zM8 6h1v1h-1zM10 6h1v1h-1zM3 7h1v1h-1zM8 7h1v1h-1zM10 7h1v1h-1zM1 8h5v1h-5zM8 8h1v1h-1zM10 8h1v1h-1zM3 9h1v1h-1zM8 9h1v1h-1zM10 9h1v1h-1zM3 10h1v1h-1zM10 10h1v1h-1zM3 11h4v1h-4zM10 11h1v1h-1zM0 12h3v1h-3zM8 12h3v1h-3z"/><path id="g35" d="M3 2h1v1h-1zM6 2h1v1h-1zM9 2h1v1h-1zM2 3h1v1h-1zM6 3h3v1h-3zM1 4h2v1h-2zM4 4h3v1h-3zM10 4h1v1h-1zM0 5h1v1h-1zM2 5h1v1h-1zM7 5h4v1h-4zM2 7h7v1h-7zM2 8h1v1h-1zM8 8h1v1h-1zM2 9h1v1h-1zM5 9h1v1h-1zM8 9h1v1h-1zM2 10h1v1h-1zM5 10h1v1h-1zM8 10h1v1h-1zM4 11h1v1h-1zM6 11h1v1h-1zM1 12h3v1h-3zM7 12h3v1h-3z"/><path id="g36" d="M3 2h1v1h-1zM8 2h1v1h-1zM3 3h1v1h-1zM8 3h1v1h-1zM2 4h1v1h-1zM8 4h1v1h-1zM2 5h1v1h-1zM4 5h7v1h-7zM1 6h2v1h-2zM8 6h1v1h-1zM0 7h1v1h-1zM2 7h1v1h-1zM5 7h1v1h-1zM8 7h1v1h-1zM2 8h1v1h-1zM6 8h1v1h-1zM8 8h1v1h-1zM2 9h1v1h-1zM6 9h1v1h-1zM8 9h1v1h-1zM2 10h1v1h-1zM8 10h1v1h-1zM2 11h1v1h-1zM8 11h1v1h-1zM2 12h1v1h-1zM6 12h3v1h-3z"/><path id="g37" d="M3 2h1v1h-1zM7 2h1v1h-1zM0 3h6v1h-6zM7 3h1v1h-1zM3 4h1v1h-1zM7 4h4v1h-4zM1 5h4v1h-4zM6 5h1v1h-1zM10 5h1v1h-1zM8 6h1v1h-1zM10 6h1v1h-1zM1 7h4v1h-4zM8 7h1v1h-1zM8 8h1v1h-1zM0 9h6v1h-6zM8 9h1v1h-1zM1 10h1v1h-1zM3 10h1v1h-1zM5 10h1v1h-1zM7 10h1v1h-1zM9 10h1v1h-1zM0 11h1v1h-1zM3 11h1v1h-1zM6 11h1v1h-1zM9 11h1v1h-1zM1 12h3v1h-3zM5 12h1v1h-1zM10 12h1v1h-1z"/><path id="g38" d="M4 2h1v1h-1zM5 3h1v1h-1zM0 4h11v1h-11zM0 5h1v1h-1zM10 5h1v1h-1zM2 6h7v1h-7zM5 7h1v1h-1zM5 8h1v1h-1zM2 9h7v1h-7zM5 10h1v1h-1zM7 10h1v1h-1zM5 11h1v1h-1zM8 11h1v1h-1zM0 12h11v1h-11z"/><path id="g39" d="M0 2h4v1h-4zM5 2h1v1h-1zM0 3h1v1h-1zM3 3h1v1h-1zM5 3h5v1h-5zM0 4h1v1h-1zM2 4h1v1h-1zM4 4h2v1h-2zM9 4h1v1h-1zM0 5h2v1h-2zM6 5h3v1h-3zM0 6h1v1h-1zM2 6h1v1h-1zM4 6h2v1h-2zM9 6h2v1h-2zM0 7h1v1h-1zM3 7h1v1h-1zM5 7h1v1h-1zM7 7h1v1h-1zM0 8h1v1h-1zM3 8h1v1h-1zM5 8h6v1h-6zM0 9h5v1h-5zM7 9h1v1h-1zM0 10h1v1h-1zM2 10h1v1h-1zM5 10h5v1h-5zM0 11h1v1h-1zM7 11h1v1h-1zM0 12h1v1h-1zM3 12h8v1h-8z"/><path id="g40" d="M5 2h1v1h-1zM5 3h1v1h-1zM1 4h9v1h-9zM1 5h1v1h-1zM5 5h1v1h-1zM9 5h1v1h-1zM1 6h9v1h-9zM1 7h1v1h-1zM5 7h1v1h-1zM9 7h1v1h-1zM1 8h1v1h-1zM5 8h1v1h-1zM9 8h1v1h-1zM1 9h9v1h-9zM5 10h1v1h-1zM10 10h1v1h-1zM5 11h1v1h-1zM10 11h1v1h-1zM6 12h5v1h-5z"/><path id="g41" d="M2 2h1v1h-1zM2 3h1v1h-1zM5 3h4v1h-4zM2 4h1v1h-1zM5 4h1v1h-1zM8 4h1v1h-1zM0 5h6v1h-6zM8 5h1v1h-1zM2 6h1v1h-1zM5 6h1v1h-1zM8 6h1v1h-1zM1 7h3v1h-3zM5 7h1v1h-1zM8 7h1v1h-1zM1 8h2v1h-2zM4 8h2v1h-2zM8 8h1v1h-1zM0 9h1v1h-1zM2 9h1v1h-1zM5 9h1v1h-1zM8 9h1v1h-1zM0 10h1v1h-1zM2 10h1v1h-1zM5 10h1v1h-1zM8 10h1v1h-1zM2 11h1v1h-1zM4 11h1v1h-1zM8 11h1v1h-1zM10 11h1v1h-1zM2 12h2v1h-2zM8 12h3v1h-3z"/><path id="g42" d="M3 2h1v1h-1zM10 2h1v1h-1zM1 3h1v1h-1zM3 3h1v1h-1zM8 3h1v1h-1zM10 3h1v1h-1zM1 4h6v1h-6zM8 4h1v1h-1zM10 4h1v1h-1zM0 5h1v1h-1zM3 5h1v1h-1zM8 5h1v1h-1zM10 5h1v1h-1zM0 6h7v1h-7zM8 6h1v1h-1zM10 6h1v1h-1zM3 7h1v1h-1zM8 7h1v1h-1zM10 7h1v1h-1zM1 8h6v1h-6zM8 8h1v1h-1zM10 8h1v1h-1zM1 9h1v1h-1zM3 9h1v1h-1zM6 9h1v1h-1zM8 9h1v1h-1zM10 9h1v1h-1zM1 10h1v1h-1zM3 10h1v1h-1zM6 10h1v1h-1zM10 10h1v1h-1zM1 11h1v1h-1zM3 11h1v1h-1zM5 11h2v1h-2zM10 11h1v1h-1zM3 12h1v1h-1zM8 12h3v1h-3z"/><path id="g43" d="M1 2h1v1h-1zM7 2h1v1h-1zM2 3h1v1h-1zM5 3h1v1h-1zM7 3h1v1h-1zM2 4h1v1h-1zM5 4h5v1h-5zM4 5h1v1h-1zM7 5h1v1h-1zM0 6h3v1h-3zM4 6h7v1h-7zM2 7h1v1h-1zM2 8h1v1h-1zM5 8h5v1h-5zM2 9h1v1h-1zM5 9h1v1h-1zM9 9h1v1h-1zM2 10h1v1h-1zM5 10h5v1h-5zM1 11h1v1h-1zM3 11h1v1h-1zM0 12h1v1h-1zM4 12h7v1h-7z"/><path id="g44" d="M4 2h1v1h-1zM0 3h11v1h-11zM3 4h1v1h-1zM3 5h6v1h-6zM2 6h2v1h-2zM8 6h1v1h-1zM1 7h1v1h-1zM3 7h6v1h-6zM0 8h1v1h-1zM3 8h1v1h-1zM8 8h1v1h-1zM3 9h6v1h-6zM3 10h1v1h-1zM8 10h1v1h-1zM3 11h1v1h-1zM8 11h1v1h-1zM3 12h1v1h-1zM7 12h2v1h-2z"/><path id="g45" d="M0 2h4v1h-4zM5 2h5v1h-5zM0 3h1v1h-1zM3 3h1v1h-1zM5 3h1v1h-1zM9 3h1v1h-1zM0 4h1v1h-1zM2 4h1v1h-1zM5 4h5v1h-5zM0 5h2v1h-2zM5 5h1v1h-1zM9 5h1v1h-1zM0 6h1v1h-1zM2 6h1v1h-1zM5 6h5v1h-5zM0 7h1v1h-1zM3 7h1v1h-1zM5 7h1v1h-1zM7 7h1v1h-1zM0 8h1v1h-1zM3 8h1v1h-1zM5 8h1v1h-1zM7 8h1v1h-1zM10 8h1v1h-1zM0 9h2v1h-2zM3 9h1v1h-1zM5 9h1v1h-1zM7 9h1v1h-1zM9 9h1v1h-1zM0 10h1v1h-1zM2 10h1v1h-1zM5 10h1v1h-1zM8 10h1v1h-1zM0 11h1v1h-1zM5 11h1v1h-1zM7 11h1v1h-1zM9 11h1v1h-1zM0 12h1v1h-1zM5 12h2v1h-2zM10 12h1v1h-1z"/><path id="g46" d="M7 2h1v1h-1zM3 3h1v1h-1zM7 3h1v1h-1zM3 4h1v1h-1zM8 4h1v1h-1zM2 5h1v1h-1zM8 5h1v1h-1zM2 6h1v1h-1zM5 6h1v1h-1zM9 6h1v1h-1zM1 7h1v1h-1zM5 7h1v1h-1zM10 7h1v1h-1zM0 8h1v1h-1zM4 8h1v1h-1zM4 9h1v1h-1zM7 9h1v1h-1zM3 10h1v1h-1zM8 10h1v1h-1zM2 11h8v1h-8zM3 12h1v1h-1zM9 12h1v1h-1z"/><path id="g47" d="M1 2h9v1h-9zM9 3h1v1h-1zM0 4h8v1h-8zM9 4h1v1h-1zM9 5h1v1h-1zM1 6h6v1h-6zM9 6h1v1h-1zM1 7h1v1h-1zM6 7h1v1h-1zM9 7h1v1h-1zM1 8h1v1h-1zM6 8h1v1h-1zM9 8h1v1h-1zM1 9h6v1h-6zM9 9h1v1h-1zM9 10h1v1h-1zM9 11h1v1h-1zM6 12h3v1h-3z"/><path id="g48" d="M5 2h1v1h-1zM1 3h10v1h-10zM1 4h1v1h-1zM10 4h1v1h-1zM0 5h1v1h-1zM4 5h1v1h-1zM9 5h1v1h-1zM4 6h1v1h-1zM0 7h11v1h-11zM3 8h1v1h-1zM7 8h1v1h-1zM2 9h2v1h-2zM7 9h1v1h-1zM4 10h3v1h-3zM4 11h1v1h-1zM7 11h2v1h-2zM1 12h3v1h-3zM9 12h2v1h-2z"/><path id="g49" d="M2 2h1v1h-1zM4 2h1v1h-1zM6 2h1v1h-1zM8 2h1v1h-1zM1 3h6v1h-6zM8 3h1v1h-1zM0 4h1v1h-1zM8 4h3v1h-3zM2 5h7v1h-7zM10 5h1v1h-1zM1 6h1v1h-1zM4 6h1v1h-1zM8 6h1v1h-1zM10 6h1v1h-1zM0 7h2v1h-2zM3 7h3v1h-3zM8 7h1v1h-1zM10 7h1v1h-1zM1 8h1v1h-1zM4 8h1v1h-1zM6 8h1v1h-1zM8 8h1v1h-1zM10 8h1v1h-1zM1 9h7v1h-7zM9 9h1v1h-1zM1 10h1v1h-1zM3 10h3v1h-3zM9 10h1v1h-1zM1 11h2v1h-2zM4 11h1v1h-1zM6 11h1v1h-1zM8 11h1v1h-1zM10 11h1v1h-1zM1 12h1v1h-1zM3 12h2v1h-2zM7 12h1v1h-1zM10 12h1v1h-1z"/><path id="g50" d="M5 2h1v1h-1zM0 3h11v1h-11zM0 4h1v1h-1zM3 4h1v1h-1zM6 4h1v1h-1zM10 4h1v1h-1zM1 5h9v1h-9zM3 6h1v1h-1zM6 6h1v1h-1zM0 7h11v1h-11zM2 8h2v1h-2zM7 8h2v1h-2zM0 9h2v1h-2zM3 9h1v1h-1zM5 9h1v1h-1zM7 9h1v1h-1zM9 9h2v1h-2zM3 10h1v1h-1zM5 10h1v1h-1zM7 10h1v1h-1zM4 11h1v1h-1zM6 11h2v1h-2zM1 12h3v1h-3zM8 12h2v1h-2z"/><path id="g51" d="M1 2h1v1h-1zM4 2h7v1h-7zM2 3h1v1h-1zM5 4h5v1h-5zM0 5h4v1h-4zM5 5h1v1h-1zM9 5h1v1h-1zM3 6h1v1h-1zM5 6h5v1h-5zM2 7h1v1h-1zM2 8h9v1h-9zM1 9h2v1h-2zM4 9h1v1h-1zM7 9h1v1h-1zM10 9h1v1h-1zM0 10h1v1h-1zM2 10h1v1h-1zM4 10h7v1h-7zM2 11h1v1h-1zM4 11h1v1h-1zM7 11h1v1h-1zM10 11h1v1h-1zM2 12h1v1h-1zM4 12h7v1h-7z"/><path id="g52" d="M2 2h7v1h-7zM7 3h1v1h-1zM6 4h1v1h-1zM5 5h1v1h-1zM5 6h1v1h-1zM0 7h11v1h-11zM5 8h1v1h-1zM5 9h1v1h-1zM5 10h1v1h-1zM3 11h1v1h-1zM5 11h1v1h-1zM4 12h1v1h-1z"/><path id="g53" d="M2 2h7v1h-7zM2 3h1v1h-1zM8 3h1v1h-1zM2 4h7v1h-7zM2 5h1v1h-1zM8 5h1v1h-1zM2 6h7v1h-7zM1 8h1v1h-1zM6 8h1v1h-1zM9 8h1v1h-1zM1 9h4v1h-4zM6 9h1v1h-1zM8 9h1v1h-1zM1 10h1v1h-1zM6 10h2v1h-2zM10 10h1v1h-1zM1 11h1v1h-1zM3 11h2v1h-2zM6 11h1v1h-1zM10 11h1v1h-1zM1 12h2v1h-2zM7 12h4v1h-4z"/><path id="g54" d="M5 2h1v1h-1zM5 3h1v1h-1zM1 4h1v1h-1zM5 4h1v1h-1zM9 4h1v1h-1zM1 5h1v1h-1zM5 5h1v1h-1zM9 5h1v1h-1zM1 6h1v1h-1zM5 6h1v1h-1zM9 6h1v1h-1zM1 7h1v1h-1zM5 7h1v1h-1zM9 7h1v1h-1zM1 8h1v1h-1zM5 8h1v1h-1zM9 8h1v1h-1zM1 9h1v1h-1zM5 9h1v1h-1zM9 9h1v1h-1zM1 10h1v1h-1zM5 10h1v1h-1zM9 10h1v1h-1zM1 11h9v1h-9zM1 12h1v1h-1zM9 12h1v1h-1z"/><path id="g55" d="M5 2h1v1h-1zM1 3h9v1h-9zM4 4h1v1h-1zM6 4h1v1h-1zM3 5h1v1h-1zM7 5h1v1h-1zM0 6h11v1h-11zM8 7h1v1h-1zM2 8h5v1h-5zM8 8h1v1h-1zM2 9h1v1h-1zM6 9h1v1h-1zM8 9h1v1h-1zM2 10h5v1h-5zM8 10h1v1h-1zM8 11h1v1h-1zM7 12h2v1h-2z"/><path id="g56" d="M1 2h1v1h-1zM7 2h2v1h-2zM2 3h1v1h-1zM4 3h3v1h-3zM0 4h1v1h-1zM6 4h1v1h-1zM1 5h1v1h-1zM3 5h1v1h-1zM6 5h1v1h-1zM3 6h8v1h-8zM2 7h1v1h-1zM6 7h1v1h-1zM2 8h1v1h-1zM6 8h1v1h-1zM0 9h2v1h-2zM5 9h1v1h-1zM7 9h1v1h-1zM1 10h1v1h-1zM5 10h1v1h-1zM7 10h1v1h-1zM1 11h1v1h-1zM4 11h1v1h-1zM8 11h1v1h-1zM1 12h3v1h-3zM9 12h2v1h-2z"/><path id="g57" d="M0 3h11v1h-11zM5 4h1v1h-1zM4 5h1v1h-1zM3 6h1v1h-1zM2 7h8v1h-8zM1 8h1v1h-1zM3 8h1v1h-1zM9 8h1v1h-1zM0 9h1v1h-1zM3 9h1v1h-1zM9 9h1v1h-1zM3 10h1v1h-1zM9 10h1v1h-1zM3 11h7v1h-7zM3 12h1v1h-1zM9 12h1v1h-1z"/><path id="g58" d="M5 2h1v1h-1zM0 3h11v1h-11zM0 4h1v1h-1zM10 4h1v1h-1zM0 5h1v1h-1zM2 5h7v1h-7zM10 5h1v1h-1zM3 6h1v1h-1zM5 6h1v1h-1zM9 6h1v1h-1zM2 7h1v1h-1zM4 7h1v1h-1zM6 7h1v1h-1zM8 7h1v1h-1zM3 8h1v1h-1zM6 8h2v1h-2zM1 9h2v1h-2zM4 9h3v1h-3zM8 9h1v1h-1zM3 10h1v1h-1zM6 10h1v1h-1zM9 10h1v1h-1zM1 11h2v1h-2zM6 11h1v1h-1zM10 11h1v1h-1zM4 12h2v1h-2z"/><path id="g59" d="M6 2h1v1h-1zM2 3h9v1h-9zM2 4h1v1h-1zM2 5h1v1h-1zM6 5h1v1h-1zM2 6h1v1h-1zM6 6h1v1h-1zM2 7h1v1h-1zM4 7h6v1h-6zM2 8h1v1h-1zM6 8h1v1h-1zM2 9h1v1h-1zM6 9h1v1h-1zM2 10h1v1h-1zM6 10h1v1h-1zM1 11h1v1h-1zM6 11h1v1h-1zM0 12h1v1h-1zM3 12h8v1h-8z"/><path id="g60" d="M1 2h1v1h-1zM4 2h6v1h-6zM2 3h1v1h-1zM6 3h1v1h-1zM8 3h1v1h-1zM2 4h1v1h-1zM4 4h7v1h-7zM4 5h1v1h-1zM7 5h1v1h-1zM10 5h1v1h-1zM0 6h3v1h-3zM4 6h7v1h-7zM2 7h1v1h-1zM4 7h1v1h-1zM7 7h1v1h-1zM10 7h1v1h-1zM2 8h1v1h-1zM4 8h7v1h-7zM2 9h1v1h-1zM4 9h1v1h-1zM7 9h1v1h-1zM10 9h1v1h-1zM2 10h1v1h-1zM4 10h1v1h-1zM7 10h1v1h-1zM9 10h2v1h-2zM1 11h1v1h-1zM3 11h1v1h-1zM0 12h1v1h-1zM4 12h7v1h-7z"/><path id="g61" d="M5 2h1v1h-1zM4 3h1v1h-1zM6 3h1v1h-1zM3 4h1v1h-1zM7 4h1v1h-1zM2 5h1v1h-1zM8 5h1v1h-1zM0 6h2v1h-2zM3 6h5v1h-5zM9 6h2v1h-2zM2 8h7v1h-7zM2 9h1v1h-1zM8 9h1v1h-1zM2 10h1v1h-1zM8 10h1v1h-1zM2 11h7v1h-7zM2 12h1v1h-1zM8 12h1v1h-1z"/><path id="g62" d="M3 2h2v1h-2zM9 2h1v1h-1zM0 3h3v1h-3zM6 3h1v1h-1zM9 3h1v1h-1zM2 4h1v1h-1zM7 4h1v1h-1zM9 4h1v1h-1zM0 5h5v1h-5zM9 5h1v1h-1zM2 6h1v1h-1zM6 6h1v1h-1zM9 6h1v1h-1zM2 7h2v1h-2zM7 7h1v1h-1zM9 7h1v1h-1zM1 8h2v1h-2zM4 8h1v1h-1zM9 8h2v1h-2zM0 9h1v1h-1zM2 9h1v1h-1zM7 9h3v1h-3zM2 10h1v1h-1zM5 10h2v1h-2zM9 10h1v1h-1zM2 11h1v1h-1zM9 11h1v1h-1zM2 12h1v1h-1zM9 12h1v1h-1z"/><path id="g63" d="M2 2h1v1h-1zM7 2h1v1h-1zM2 3h1v1h-1zM7 3h1v1h-1zM0 4h11v1h-11zM2 5h1v1h-1zM7 5h1v1h-1zM2 6h1v1h-1zM4 6h6v1h-6zM2 7h2v1h-2zM5 7h1v1h-1zM9 7h1v1h-1zM1 8h2v1h-2zM5 8h1v1h-1zM9 8h1v1h-1zM0 9h1v1h-1zM2 9h1v1h-1zM6 9h1v1h-1zM8 9h1v1h-1zM2 10h1v1h-1zM7 10h1v1h-1zM2 11h1v1h-1zM6 11h1v1h-1zM8 11h1v1h-1zM0 12h3v1h-3zM4 12h2v1h-2zM9 12h2v1h-2z"/><path id="g64" d="M1 2h4v1h-4zM6 2h4v1h-4zM1 3h1v1h-1zM4 3h1v1h-1zM6 3h1v1h-1zM9 3h1v1h-1zM1 4h1v1h-1zM4 4h1v1h-1zM6 4h1v1h-1zM9 4h1v1h-1zM1 5h5v1h-5zM9 5h2v1h-2zM1 6h1v1h-1zM4 6h1v1h-1zM1 7h1v1h-1zM4 7h1v1h-1zM6 7h5v1h-5zM1 8h4v1h-4zM6 8h1v1h-1zM10 8h1v1h-1zM1 9h1v1h-1zM4 9h1v1h-1zM7 9h1v1h-1zM9 9h1v1h-1zM1 10h1v1h-1zM4 10h1v1h-1zM8 10h1v1h-1zM0 11h1v1h-1zM4 11h1v1h-1zM7 11h1v1h-1zM9 11h1v1h-1zM0 12h1v1h-1zM3 12h4v1h-4zM10 12h1v1h-1z"/><path id="g65" d="M3 2h1v1h-1zM8 2h1v1h-1zM3 3h1v1h-1zM6 3h1v1h-1zM8 3h1v1h-1zM2 4h1v1h-1zM6 4h1v1h-1zM9 4h1v1h-1zM2 5h1v1h-1zM5 5h1v1h-1zM9 5h1v1h-1zM1 6h2v1h-2zM4 6h1v1h-1zM10 6h1v1h-1zM0 7h1v1h-1zM2 7h1v1h-1zM5 7h5v1h-5zM2 8h1v1h-1zM6 8h1v1h-1zM9 8h1v1h-1zM2 9h1v1h-1zM6 9h1v1h-1zM9 9h1v1h-1zM2 10h1v1h-1zM6 10h1v1h-1zM9 10h1v1h-1zM2 11h1v1h-1zM5 11h1v1h-1zM9 11h1v1h-1zM2 12h1v1h-1zM4 12h1v1h-1zM8 12h2v1h-2z"/><path id="g66" d="M3 2h1v1h-1zM7 2h1v1h-1zM0 3h11v1h-11zM3 4h1v1h-1zM7 4h1v1h-1zM4 5h1v1h-1zM1 6h8v1h-8zM4 7h1v1h-1zM8 7h1v1h-1zM1 8h1v1h-1zM4 8h1v1h-1zM8 8h2v1h-2zM1 9h1v1h-1zM4 9h1v1h-1zM8 9h1v1h-1zM10 9h1v1h-1zM0 10h1v1h-1zM3 10h1v1h-1zM8 10h1v1h-1zM10 10h1v1h-1zM2 11h1v1h-1zM8 11h1v1h-1zM0 12h2v1h-2zM6 12h2v1h-2z"/><path id="g67" d="M3 2h1v1h-1zM10 2h1v1h-1zM3 3h1v1h-1zM6 3h1v1h-1zM10 3h1v1h-1zM3 4h1v1h-1zM6 4h1v1h-1zM10 4h1v1h-1zM1 5h1v1h-1zM3 5h2v1h-2zM6 5h2v1h-2zM10 5h1v1h-1zM1 6h1v1h-1zM3 6h1v1h-1zM5 6h2v1h-2zM8 6h1v1h-1zM10 6h1v1h-1zM0 7h1v1h-1zM3 7h1v1h-1zM6 7h1v1h-1zM8 7h1v1h-1zM10 7h1v1h-1zM3 8h1v1h-1zM6 8h1v1h-1zM10 8h1v1h-1zM3 9h1v1h-1zM6 9h1v1h-1zM10 9h1v1h-1zM3 10h1v1h-1zM6 10h1v1h-1zM10 10h1v1h-1zM2 11h1v1h-1zM6 11h1v1h-1zM10 11h1v1h-1zM1 12h1v1h-1zM10 12h1v1h-1z"/><path id="g68" d="M5 2h1v1h-1zM5 3h1v1h-1zM0 4h11v1h-11zM5 5h1v1h-1zM2 6h8v1h-8zM2 7h1v1h-1zM5 7h1v1h-1zM9 7h1v1h-1zM2 8h1v1h-1zM5 8h1v1h-1zM9 8h1v1h-1zM2 9h1v1h-1zM5 9h1v1h-1zM9 9h1v1h-1zM2 10h1v1h-1zM5 10h1v1h-1zM7 10h1v1h-1zM9 10h1v1h-1zM2 11h1v1h-1zM5 11h1v1h-1zM8 11h1v1h-1zM5 12h1v1h-1z"/><path id="g69" d="M5 2h1v1h-1zM1 3h1v1h-1zM5 3h1v1h-1zM9 3h1v1h-1zM2 4h1v1h-1zM5 4h1v1h-1zM8 4h1v1h-1zM5 5h1v1h-1zM0 6h11v1h-11zM3 7h1v1h-1zM6 7h1v1h-1zM3 8h1v1h-1zM6 8h1v1h-1zM3 9h1v1h-1zM6 9h1v1h-1zM10 9h1v1h-1zM3 10h1v1h-1zM6 10h1v1h-1zM10 10h1v1h-1zM2 11h1v1h-1zM6 11h1v1h-1zM10 11h1v1h-1zM0 12h2v1h-2zM7 12h4v1h-4z"/><path id="g70" d="M0 2h1v1h-1zM3 2h6v1h-6zM1 3h1v1h-1zM5 3h1v1h-1zM8 3h1v1h-1zM1 4h1v1h-1zM5 4h1v1h-1zM8 4h1v1h-1zM5 5h1v1h-1zM8 5h1v1h-1zM0 6h2v1h-2zM5 6h1v1h-1zM8 6h1v1h-1zM1 7h1v1h-1zM3 7h6v1h-6zM1 8h1v1h-1zM5 8h1v1h-1zM8 8h1v1h-1zM1 9h1v1h-1zM3 9h1v1h-1zM5 9h1v1h-1zM8 9h1v1h-1zM10 9h1v1h-1zM1 10h2v1h-2zM5 10h1v1h-1zM8 10h1v1h-1zM10 10h1v1h-1zM1 11h1v1h-1zM5 11h1v1h-1zM9 11h2v1h-2zM5 12h1v1h-1zM10 12h1v1h-1z"/><path id="g71" d="M1 2h4v1h-4zM6 2h4v1h-4zM1 3h1v1h-1zM4 3h1v1h-1zM6 3h1v1h-1zM9 3h1v1h-1zM1 4h1v1h-1zM4 4h1v1h-1zM6 4h1v1h-1zM9 4h1v1h-1zM1 5h4v1h-4zM6 5h4v1h-4zM5 6h1v1h-1zM8 6h1v1h-1zM0 7h11v1h-11zM3 8h1v1h-1zM7 8h1v1h-1zM0 9h5v1h-5zM6 9h5v1h-5zM1 10h1v1h-1zM4 10h1v1h-1zM6 10h1v1h-1zM9 10h1v1h-1zM1 11h1v1h-1zM4 11h1v1h-1zM6 11h1v1h-1zM9 11h1v1h-1zM1 12h4v1h-4zM6 12h4v1h-4z"/><path id="g72" d="M2 2h1v1h-1zM9 2h1v1h-1zM2 3h1v1h-1zM9 3h1v1h-1zM2 4h1v1h-1zM9 4h1v1h-1zM0 5h5v1h-5zM6 5h5v1h-5zM2 6h1v1h-1zM9 6h1v1h-1zM1 7h3v1h-3zM8 7h2v1h-2zM1 8h2v1h-2zM4 8h1v1h-1zM7 8h1v1h-1zM9 8h1v1h-1zM0 9h1v1h-1zM2 9h1v1h-1zM6 9h1v1h-1zM9 9h1v1h-1zM2 10h1v1h-1zM5 10h1v1h-1zM9 10h1v1h-1zM2 11h1v1h-1zM7 11h1v1h-1zM9 11h1v1h-1zM2 12h1v1h-1zM8 12h1v1h-1z"/><path id="g73" d="M2 3h9v1h-9zM2 4h1v1h-1zM2 5h1v1h-1zM2 6h1v1h-1zM2 7h1v1h-1zM2 8h1v1h-1zM2 9h1v1h-1zM1 10h1v1h-1zM1 11h1v1h-1zM0 12h1v1h-1z"/><path id="g74" d="M5 2h1v1h-1zM5 3h1v1h-1zM5 4h1v1h-1zM5 5h1v1h-1zM5 6h5v1h-5zM5 7h1v1h-1zM5 8h1v1h-1zM5 9h1v1h-1zM5 10h1v1h-1zM5 11h1v1h-1zM0 12h11v1h-11z"/><path id="g75" d="M1 2h1v1h-1zM5 2h1v1h-1zM2 3h1v1h-1zM5 3h6v1h-6zM0 4h1v1h-1zM4 4h1v1h-1zM1 5h1v1h-1zM3 5h1v1h-1zM5 5h5v1h-5zM3 6h1v1h-1zM5 6h1v1h-1zM7 6h1v1h-1zM9 6h1v1h-1zM2 7h1v1h-1zM4 7h7v1h-7zM2 8h1v1h-1zM4 8h1v1h-1zM7 8h1v1h-1zM9 8h1v1h-1zM0 9h2v1h-2zM4 9h1v1h-1zM7 9h1v1h-1zM9 9h1v1h-1zM1 10h1v1h-1zM4 10h7v1h-7zM1 11h1v1h-1zM9 11h1v1h-1zM1 12h1v1h-1zM7 12h2v1h-2z"/><path id="g76" d="M1 3h9v1h-9zM2 7h7v1h-7zM0 12h11v1h-11z"/><path id="g77" d="M5 2h5v1h-5zM5 3h1v1h-1zM1 4h10v1h-10zM1 5h1v1h-1zM4 5h1v1h-1zM9 5h1v1h-1zM1 6h8v1h-8zM1 7h1v1h-1zM4 7h1v1h-1zM10 7h1v1h-1zM1 8h1v1h-1zM4 8h7v1h-7zM1 9h1v1h-1zM1 10h1v1h-1zM4 10h4v1h-4zM1 11h1v1h-1zM4 11h1v1h-1zM7 11h1v1h-1zM10 11h1v1h-1zM0 12h1v1h-1zM2 12h2v1h-2zM8 12h3v1h-3z"/><path id="g78" d="M3 2h1v1h-1zM3 3h7v1h-7zM2 4h1v1h-1zM1 5h1v1h-1zM3 5h6v1h-6zM0 6h1v1h-1zM2 7h6v1h-6zM7 8h1v1h-1zM7 9h1v1h-1zM10 9h1v1h-1zM7 10h1v1h-1zM10 10h1v1h-1zM8 11h1v1h-1zM10 11h1v1h-1zM9 12h2v1h-2z"/><path id="g79" d="M1 2h1v1h-1zM5 2h1v1h-1zM10 2h1v1h-1zM2 3h1v1h-1zM5 3h1v1h-1zM7 3h3v1h-3zM0 4h1v1h-1zM3 4h5v1h-5zM1 5h1v1h-1zM3 5h1v1h-1zM5 5h1v1h-1zM7 5h1v1h-1zM3 6h1v1h-1zM5 6h6v1h-6zM2 7h1v1h-1zM4 7h2v1h-2zM7 7h1v1h-1zM9 7h1v1h-1zM2 8h2v1h-2zM5 8h1v1h-1zM7 8h1v1h-1zM9 8h1v1h-1zM0 9h2v1h-2zM5 9h1v1h-1zM7 9h1v1h-1zM9 9h1v1h-1zM1 10h1v1h-1zM5 10h1v1h-1zM7 10h1v1h-1zM9 10h1v1h-1zM1 11h1v1h-1zM3 11h1v1h-1zM5 11h2v1h-2zM9 11h1v1h-1zM1 12h1v1h-1zM4 12h1v1h-1zM6 12h1v1h-1zM9 12h1v1h-1z"/><path id="g80" d="M1 2h1v1h-1zM2 3h1v1h-1zM5 3h5v1h-5zM0 4h1v1h-1zM7 4h1v1h-1zM1 5h1v1h-1zM3 5h1v1h-1zM7 5h1v1h-1zM3 6h1v1h-1zM7 6h1v1h-1zM2 7h1v1h-1zM7 7h1v1h-1zM2 8h1v1h-1zM7 8h1v1h-1zM0 9h2v1h-2zM7 9h1v1h-1zM1 10h1v1h-1zM7 10h1v1h-1zM1 11h1v1h-1zM3 11h8v1h-8zM1 12h1v1h-1z"/><path id="g81" d="M5 2h1v1h-1zM0 3h11v1h-11zM5 4h1v1h-1zM1 5h9v1h-9zM1 6h1v1h-1zM3 6h1v1h-1zM7 6h1v1h-1zM9 6h1v1h-1zM1 7h1v1h-1zM4 7h1v1h-1zM6 7h1v1h-1zM9 7h1v1h-1zM1 8h9v1h-9zM1 9h1v1h-1zM5 9h1v1h-1zM9 9h1v1h-1zM1 10h9v1h-9zM1 11h1v1h-1zM5 11h1v1h-1zM9 11h1v1h-1zM1 12h1v1h-1zM5 12h1v1h-1zM8 12h2v1h-2z"/><path id="g82" d="M2 2h1v1h-1zM6 2h1v1h-1zM2 3h1v1h-1zM6 3h5v1h-5zM0 4h1v1h-1zM2 4h1v1h-1zM4 4h3v1h-3zM9 4h1v1h-1zM0 5h1v1h-1zM2 5h1v1h-1zM4 5h1v1h-1zM7 5h2v1h-2zM0 6h1v1h-1zM2 6h1v1h-1zM4 6h1v1h-1zM6 6h1v1h-1zM9 6h1v1h-1zM0 7h1v1h-1zM2 7h1v1h-1zM4 7h7v1h-7zM0 8h1v1h-1zM2 8h1v1h-1zM4 8h1v1h-1zM7 8h1v1h-1zM0 9h1v1h-1zM2 9h8v1h-8zM0 10h2v1h-2zM7 10h1v1h-1zM4 11h7v1h-7zM7 12h1v1h-1z"/><path id="g83" d="M2 2h1v1h-1zM6 2h1v1h-1zM2 3h1v1h-1zM6 3h4v1h-4zM0 4h1v1h-1zM2 4h1v1h-1zM4 4h2v1h-2zM8 4h1v1h-1zM0 5h1v1h-1zM2 5h1v1h-1zM4 5h6v1h-6zM0 6h1v1h-1zM2 6h1v1h-1zM4 6h1v1h-1zM7 6h1v1h-1zM9 6h2v1h-2zM0 7h1v1h-1zM2 7h1v1h-1zM4 7h6v1h-6zM0 8h1v1h-1zM2 8h1v1h-1zM4 8h1v1h-1zM7 8h1v1h-1zM9 8h1v1h-1zM0 9h10v1h-10zM0 10h1v1h-1zM3 10h1v1h-1zM7 10h1v1h-1zM5 11h1v1h-1zM7 11h1v1h-1zM6 12h1v1h-1z"/><path id="g84" d="M1 2h1v1h-1zM3 2h8v1h-8zM2 3h1v1h-1zM9 3h1v1h-1zM0 4h1v1h-1zM9 4h1v1h-1zM1 5h1v1h-1zM4 5h4v1h-4zM9 5h1v1h-1zM4 6h1v1h-1zM7 6h1v1h-1zM9 6h1v1h-1zM2 7h1v1h-1zM4 7h1v1h-1zM7 7h1v1h-1zM9 7h1v1h-1zM2 8h1v1h-1zM4 8h4v1h-4zM9 8h1v1h-1zM0 9h2v1h-2zM9 9h1v1h-1zM1 10h1v1h-1zM9 10h1v1h-1zM1 11h1v1h-1zM7 11h1v1h-1zM9 11h1v1h-1zM1 12h1v1h-1zM8 12h1v1h-1z"/><path id="g85" d="M2 2h1v1h-1zM5 2h5v1h-5zM2 3h1v1h-1zM8 3h1v1h-1zM0 4h5v1h-5zM7 4h1v1h-1zM2 5h1v1h-1zM6 5h1v1h-1zM2 6h1v1h-1zM4 6h7v1h-7zM2 7h2v1h-2zM6 7h1v1h-1zM8 7h1v1h-1zM10 7h1v1h-1zM1 8h2v1h-2zM6 8h1v1h-1zM8 8h1v1h-1zM10 8h1v1h-1zM0 9h1v1h-1zM2 9h1v1h-1zM5 9h1v1h-1zM7 9h1v1h-1zM10 9h1v1h-1zM2 10h1v1h-1zM4 10h1v1h-1zM7 10h1v1h-1zM10 10h1v1h-1zM2 11h1v1h-1zM6 11h1v1h-1zM10 11h1v1h-1zM0 12h3v1h-3zM5 12h1v1h-1zM8 12h2v1h-2z"/><path id="g86" d="M1 2h1v1h-1zM6 2h1v1h-1zM9 2h1v1h-1zM1 3h1v1h-1zM3 3h8v1h-8zM1 4h1v1h-1zM6 4h1v1h-1zM0 5h3v1h-3zM4 5h6v1h-6zM1 6h1v1h-1zM4 6h1v1h-1zM6 6h1v1h-1zM9 6h1v1h-1zM1 7h1v1h-1zM4 7h6v1h-6zM1 8h1v1h-1zM4 8h1v1h-1zM6 8h1v1h-1zM9 8h1v1h-1zM1 9h10v1h-10zM1 10h1v1h-1zM4 10h1v1h-1zM8 10h1v1h-1zM1 11h1v1h-1zM5 11h1v1h-1zM8 11h1v1h-1zM1 12h1v1h-1zM7 12h2v1h-2z"/><path id="g87" d="M0 2h11v1h-11zM6 3h1v1h-1zM6 4h1v1h-1zM5 5h1v1h-1zM4 6h2v1h-2zM7 6h1v1h-1zM3 7h1v1h-1zM5 7h1v1h-1zM8 7h1v1h-1zM2 8h1v1h-1zM5 8h1v1h-1zM9 8h1v1h-1zM1 9h1v1h-1zM5 9h1v1h-1zM10 9h1v1h-1zM0 10h1v1h-1zM5 10h1v1h-1zM5 11h1v1h-1zM5 12h1v1h-1z"/><path id="g88" d="M1 2h1v1h-1zM5 2h5v1h-5zM1 3h3v1h-3zM7 3h1v1h-1zM0 4h1v1h-1zM4 4h7v1h-7zM0 5h4v1h-4zM5 5h1v1h-1zM7 5h1v1h-1zM9 5h1v1h-1zM2 6h1v1h-1zM4 6h1v1h-1zM7 6h1v1h-1zM10 6h1v1h-1zM0 7h4v1h-4zM5 7h5v1h-5zM2 8h1v1h-1zM6 8h1v1h-1zM8 8h1v1h-1zM2 9h1v1h-1zM6 9h1v1h-1zM8 9h3v1h-3zM2 10h1v1h-1zM4 10h1v1h-1zM6 10h1v1h-1zM10 10h1v1h-1zM2 11h2v1h-2zM5 11h1v1h-1zM10 11h1v1h-1zM2 12h1v1h-1zM4 12h1v1h-1zM8 12h2v1h-2z"/><path id="g89" d="M1 2h1v1h-1zM5 2h6v1h-6zM1 3h1v1h-1zM5 3h1v1h-1zM10 3h1v1h-1zM1 4h5v1h-5zM8 4h1v1h-1zM10 4h1v1h-1zM0 5h1v1h-1zM5 5h2v1h-2zM8 5h1v1h-1zM10 5h1v1h-1zM0 6h6v1h-6zM7 6h1v1h-1zM10 6h1v1h-1zM2 7h1v1h-1zM5 7h1v1h-1zM7 7h1v1h-1zM10 7h1v1h-1zM0 8h6v1h-6zM7 8h2v1h-2zM10 8h1v1h-1zM2 9h1v1h-1zM5 9h2v1h-2zM9 9h2v1h-2zM2 10h1v1h-1zM4 10h2v1h-2zM10 10h1v1h-1zM2 11h2v1h-2zM5 11h1v1h-1zM10 11h1v1h-1zM2 12h1v1h-1zM5 12h1v1h-1zM8 12h3v1h-3z"/><path id="g90" d="M3 2h6v1h-6zM3 3h1v1h-1zM8 3h1v1h-1zM3 4h1v1h-1zM8 4h1v1h-1zM3 5h6v1h-6zM1 7h4v1h-4zM7 7h4v1h-4zM1 8h1v1h-1zM4 8h1v1h-1zM7 8h1v1h-1zM10 8h1v1h-1zM1 9h1v1h-1zM4 9h1v1h-1zM7 9h1v1h-1zM10 9h1v1h-1zM1 10h1v1h-1zM4 10h1v1h-1zM7 10h1v1h-1zM10 10h1v1h-1zM1 11h4v1h-4zM7 11h4v1h-4zM1 12h1v1h-1zM4 12h1v1h-1zM7 12h1v1h-1zM10 12h1v1h-1z"/><path id="g91" d="M3 2h1v1h-1zM6 2h1v1h-1zM0 3h3v1h-3zM6 3h4v1h-4zM2 4h1v1h-1zM5 4h1v1h-1zM8 4h1v1h-1zM0 5h10v1h-10zM2 6h1v1h-1zM9 6h1v1h-1zM2 7h2v1h-2zM5 7h5v1h-5zM2 8h1v1h-1zM4 8h1v1h-1zM9 8h1v1h-1zM1 9h2v1h-2zM5 9h5v1h-5zM0 10h1v1h-1zM2 10h1v1h-1zM4 10h2v1h-2zM7 10h1v1h-1zM9 10h1v1h-1zM2 11h2v1h-2zM5 11h1v1h-1zM10 11h1v1h-1zM2 12h1v1h-1zM6 12h4v1h-4z"/><path id="g92" d="M2 2h9v1h-9zM2 3h1v1h-1zM2 4h1v1h-1zM6 4h1v1h-1zM2 5h1v1h-1zM6 5h1v1h-1zM2 6h1v1h-1zM6 6h1v1h-1zM2 7h8v1h-8zM2 8h1v1h-1zM6 8h1v1h-1zM2 9h1v1h-1zM6 9h1v1h-1zM8 9h1v1h-1zM1 10h1v1h-1zM6 10h1v1h-1zM9 10h1v1h-1zM1 11h1v1h-1zM6 11h1v1h-1zM0 12h1v1h-1zM2 12h9v1h-9z"/><path id="g93" d="M5 2h1v1h-1zM5 3h1v1h-1zM5 4h1v1h-1zM0 5h11v1h-11zM5 6h1v1h-1zM4 7h1v1h-1zM6 7h1v1h-1zM4 8h1v1h-1zM6 8h1v1h-1zM3 9h1v1h-1zM7 9h1v1h-1zM3 10h2v1h-2zM7 10h1v1h-1zM2 11h1v1h-1zM5 11h1v1h-1zM8 11h1v1h-1zM0 12h2v1h-2zM5 12h1v1h-1zM9 12h2v1h-2z"/><path id="g94" d="M5 2h1v1h-1zM5 3h2v1h-2zM4 4h1v1h-1zM7 4h1v1h-1zM3 5h1v1h-1zM8 5h1v1h-1zM2 6h6v1h-6zM9 6h1v1h-1zM0 7h2v1h-2zM3 7h1v1h-1zM7 7h1v1h-1zM10 7h1v1h-1zM3 8h1v1h-1zM5 8h1v1h-1zM7 8h1v1h-1zM3 9h1v1h-1zM6 9h1v1h-1zM3 10h1v1h-1zM9 10h1v1h-1zM3 11h1v1h-1zM9 11h1v1h-1zM4 12h6v1h-6z"/><path id="g95" d="M1 2h4v1h-4zM7 2h4v1h-4zM1 3h1v1h-1zM4 3h1v1h-1zM7 3h1v1h-1zM10 3h1v1h-1zM1 4h1v1h-1zM4 4h1v1h-1zM7 4h1v1h-1zM10 4h1v1h-1zM1 5h4v1h-4zM7 5h4v1h-4zM1 6h1v1h-1zM4 6h1v1h-1zM7 6h1v1h-1zM10 6h1v1h-1zM1 7h1v1h-1zM4 7h1v1h-1zM7 7h1v1h-1zM10 7h1v1h-1zM1 8h4v1h-4zM7 8h4v1h-4zM1 9h1v1h-1zM4 9h1v1h-1zM7 9h1v1h-1zM10 9h1v1h-1zM1 10h1v1h-1zM4 10h1v1h-1zM7 10h1v1h-1zM10 10h1v1h-1zM1 11h1v1h-1zM4 11h1v1h-1zM7 11h1v1h-1zM10 11h1v1h-1zM0 12h1v1h-1zM3 12h2v1h-2zM6 12h1v1h-1zM9 12h2v1h-2z"/><path id="g96" d="M1 2h1v1h-1zM7 2h1v1h-1zM1 3h1v1h-1zM4 3h7v1h-7zM0 4h3v1h-3zM4 4h1v1h-1zM7 4h1v1h-1zM9 4h1v1h-1zM0 5h2v1h-2zM3 5h8v1h-8zM0 6h2v1h-2zM4 6h1v1h-1zM7 6h1v1h-1zM9 6h1v1h-1zM1 7h1v1h-1zM4 7h6v1h-6zM1 8h1v1h-1zM4 8h1v1h-1zM7 8h1v1h-1zM1 9h1v1h-1zM4 9h2v1h-2zM7 9h1v1h-1zM9 9h1v1h-1zM1 10h1v1h-1zM4 10h1v1h-1zM6 10h3v1h-3zM1 11h1v1h-1zM3 11h1v1h-1zM5 11h1v1h-1zM7 11h1v1h-1zM9 11h1v1h-1zM1 12h2v1h-2zM4 12h1v1h-1zM6 12h2v1h-2zM10 12h1v1h-1z"/><path id="g97" d="M5 2h1v1h-1zM5 3h1v1h-1zM1 4h10v1h-10zM4 5h1v1h-1zM6 5h1v1h-1zM3 6h1v1h-1zM6 6h1v1h-1zM2 7h8v1h-8zM6 8h1v1h-1zM3 9h1v1h-1zM6 9h1v1h-1zM8 9h1v1h-1zM2 10h1v1h-1zM6 10h1v1h-1zM9 10h1v1h-1zM1 11h1v1h-1zM6 11h1v1h-1zM10 11h1v1h-1zM4 12h3v1h-3z"/><path id="g98" d="M2 2h1v1h-1zM2 3h4v1h-4zM7 3h4v1h-4zM1 4h1v1h-1zM3 4h1v1h-1zM7 4h1v1h-1zM10 4h1v1h-1zM1 5h7v1h-7zM10 5h1v1h-1zM3 6h2v1h-2zM7 6h4v1h-4zM2 7h1v1h-1zM5 7h1v1h-1zM7 7h1v1h-1zM10 7h1v1h-1zM1 8h1v1h-1zM3 8h7v1h-7zM3 9h1v1h-1zM9 9h1v1h-1zM3 10h7v1h-7zM3 11h1v1h-1zM9 11h1v1h-1zM3 12h7v1h-7z"/><path id="g99" d="M6 2h1v1h-1zM8 2h1v1h-1zM1 3h10v1h-10zM1 4h1v1h-1zM6 4h1v1h-1zM1 5h4v1h-4zM6 5h1v1h-1zM9 5h1v1h-1zM1 6h1v1h-1zM4 6h1v1h-1zM6 6h1v1h-1zM8 6h1v1h-1zM1 7h1v1h-1zM3 7h2v1h-2zM7 7h2v1h-2zM10 7h1v1h-1zM0 8h1v1h-1zM6 8h1v1h-1zM9 8h2v1h-2zM1 9h9v1h-9zM1 10h1v1h-1zM4 10h1v1h-1zM6 10h1v1h-1zM9 10h1v1h-1zM1 11h1v1h-1zM4 11h1v1h-1zM6 11h1v1h-1zM9 11h1v1h-1zM0 12h11v1h-11z"/><path id="g100" d="M1 2h1v1h-1zM7 2h1v1h-1zM2 3h1v1h-1zM7 3h1v1h-1zM2 4h1v1h-1zM7 4h1v1h-1zM4 5h7v1h-7zM0 6h3v1h-3zM7 6h1v1h-1zM2 7h1v1h-1zM7 7h1v1h-1zM2 8h1v1h-1zM6 8h1v1h-1zM8 8h1v1h-1zM2 9h1v1h-1zM5 9h1v1h-1zM9 9h1v1h-1zM2 10h1v1h-1zM4 10h1v1h-1zM10 10h1v1h-1zM1 11h1v1h-1zM3 11h1v1h-1zM0 12h1v1h-1zM4 12h7v1h-7z"/><path id="g101" d="M1 2h1v1h-1zM5 2h4v1h-4zM2 3h1v1h-1zM5 3h1v1h-1zM8 3h1v1h-1zM5 4h1v1h-1zM8 4h1v1h-1zM4 5h1v1h-1zM8 5h3v1h-3zM0 6h3v1h-3zM2 7h1v1h-1zM4 7h6v1h-6zM2 8h1v1h-1zM5 8h1v1h-1zM9 8h1v1h-1zM2 9h1v1h-1zM6 9h1v1h-1zM8 9h1v1h-1zM2 10h2v1h-2zM7 10h1v1h-1zM2 11h1v1h-1zM6 11h1v1h-1zM8 11h1v1h-1zM3 12h3v1h-3zM9 12h2v1h-2z"/><path id="g102" d="M3 2h1v1h-1zM3 3h6v1h-6zM2 4h2v1h-2zM7 4h1v1h-1zM1 5h1v1h-1zM4 5h3v1h-3zM4 6h1v1h-1zM6 6h2v1h-2zM2 7h2v1h-2zM8 7h3v1h-3zM0 8h9v1h-9zM2 9h1v1h-1zM5 9h1v1h-1zM8 9h1v1h-1zM2 10h7v1h-7zM2 11h1v1h-1zM5 11h1v1h-1zM8 11h1v1h-1zM2 12h7v1h-7z"/><path id="g103" d="M2 2h1v1h-1zM7 2h1v1h-1zM2 3h1v1h-1zM8 3h1v1h-1zM0 4h11v1h-11zM2 5h1v1h-1zM2 6h1v1h-1zM6 6h3v1h-3zM2 7h2v1h-2zM6 7h1v1h-1zM8 7h1v1h-1zM1 8h2v1h-2zM4 8h1v1h-1zM6 8h1v1h-1zM8 8h1v1h-1zM0 9h1v1h-1zM2 9h1v1h-1zM6 9h1v1h-1zM8 9h1v1h-1zM2 10h1v1h-1zM6 10h1v1h-1zM8 10h1v1h-1zM10 10h1v1h-1zM2 11h1v1h-1zM5 11h1v1h-1zM8 11h1v1h-1zM10 11h1v1h-1zM2 12h1v1h-1zM4 12h1v1h-1zM9 12h2v1h-2z"/><path id="g104" d="M2 2h1v1h-1zM10 2h1v1h-1zM2 3h1v1h-1zM6 3h1v1h-1zM10 3h1v1h-1zM2 4h1v1h-1zM6 4h1v1h-1zM10 4h1v1h-1zM2 5h1v1h-1zM6 5h1v1h-1zM10 5h1v1h-1zM2 6h1v1h-1zM6 6h1v1h-1zM10 6h1v1h-1zM2 7h1v1h-1zM6 7h1v1h-1zM10 7h1v1h-1zM2 8h1v1h-1zM6 8h1v1h-1zM10 8h1v1h-1zM2 9h1v1h-1zM6 9h1v1h-1zM10 9h1v1h-1zM2 10h1v1h-1zM6 10h1v1h-1zM10 10h1v1h-1zM1 11h1v1h-1zM10 11h1v1h-1zM0 12h1v1h-1zM10 12h1v1h-1z"/><path id="g105" d="M1 2h1v1h-1zM4 2h7v1h-7zM2 3h1v1h-1zM4 3h1v1h-1zM8 3h1v1h-1zM0 4h1v1h-1zM4 4h1v1h-1zM6 4h5v1h-5zM1 5h1v1h-1zM4 5h1v1h-1zM6 5h1v1h-1zM10 5h1v1h-1zM3 6h2v1h-2zM6 6h5v1h-5zM2 7h1v1h-1zM4 7h1v1h-1zM6 7h1v1h-1zM10 7h1v1h-1zM2 8h1v1h-1zM4 8h1v1h-1zM6 8h5v1h-5zM0 9h2v1h-2zM4 9h1v1h-1zM8 9h1v1h-1zM1 10h1v1h-1zM4 10h1v1h-1zM6 10h1v1h-1zM8 10h2v1h-2zM1 11h1v1h-1zM3 11h1v1h-1zM5 11h1v1h-1zM8 11h1v1h-1zM10 11h1v1h-1zM1 12h2v1h-2zM4 12h1v1h-1zM7 12h2v1h-2zM10 12h1v1h-1z"/><path id="g106" d="M5 2h1v1h-1zM5 3h1v1h-1zM5 4h1v1h-1zM1 5h9v1h-9zM5 6h1v1h-1zM9 6h1v1h-1zM5 7h1v1h-1zM9 7h1v1h-1zM4 8h1v1h-1zM9 8h1v1h-1zM4 9h1v1h-1zM9 9h1v1h-1zM3 10h1v1h-1zM9 10h1v1h-1zM2 11h1v1h-1zM9 11h1v1h-1zM1 12h1v1h-1zM6 12h3v1h-3z"/><path id="g107" d="M1 2h9v1h-9zM5 3h1v1h-1zM0 4h11v1h-11zM0 5h1v1h-1zM5 5h1v1h-1zM10 5h1v1h-1zM0 6h1v1h-1zM2 6h2v1h-2zM5 6h1v1h-1zM7 6h2v1h-2zM10 6h1v1h-1zM5 7h1v1h-1zM1 8h9v1h-9zM1 9h1v1h-1zM5 9h1v1h-1zM9 9h1v1h-1zM1 10h9v1h-9zM1 11h1v1h-1zM5 11h1v1h-1zM9 11h1v1h-1zM1 12h9v1h-9z"/><path id="g108" d="M7 2h3v1h-3zM2 3h5v1h-5zM2 4h1v1h-1zM2 5h1v1h-1zM6 5h1v1h-1zM2 6h1v1h-1zM6 6h1v1h-1zM2 7h9v1h-9zM6 8h1v1h-1zM3 9h1v1h-1zM6 9h1v1h-1zM8 9h1v1h-1zM2 10h1v1h-1zM6 10h1v1h-1zM9 10h1v1h-1zM1 11h1v1h-1zM6 11h1v1h-1zM10 11h1v1h-1zM5 12h2v1h-2z"/><path id="g109" d="M5 2h1v1h-1zM5 3h1v1h-1zM5 4h1v1h-1zM5 5h1v1h-1zM0 6h11v1h-11zM5 7h1v1h-1zM5 8h1v1h-1zM5 9h1v1h-1zM5 10h1v1h-1zM5 11h1v1h-1zM1 12h9v1h-9z"/><path id="g110" d="M1 2h1v1h-1zM5 2h1v1h-1zM7 2h1v1h-1zM2 3h1v1h-1zM5 3h1v1h-1zM7 3h1v1h-1zM0 4h1v1h-1zM5 4h5v1h-5zM1 5h1v1h-1zM3 5h2v1h-2zM7 5h1v1h-1zM3 6h1v1h-1zM7 6h1v1h-1zM2 7h1v1h-1zM4 7h7v1h-7zM2 8h1v1h-1zM0 9h2v1h-2zM5 9h5v1h-5zM1 10h1v1h-1zM5 10h1v1h-1zM9 10h1v1h-1zM1 11h1v1h-1zM5 11h1v1h-1zM9 11h1v1h-1zM1 12h1v1h-1zM5 12h5v1h-5z"/><path id="g111" d="M4 2h1v1h-1zM7 2h1v1h-1zM4 3h1v1h-1zM7 3h1v1h-1zM4 4h1v1h-1zM7 4h1v1h-1zM10 4h1v1h-1zM0 5h1v1h-1zM4 5h1v1h-1zM7 5h1v1h-1zM10 5h1v1h-1zM1 6h1v1h-1zM4 6h1v1h-1zM7 6h1v1h-1zM9 6h1v1h-1zM2 7h1v1h-1zM4 7h1v1h-1zM7 7h1v1h-1zM9 7h1v1h-1zM2 8h1v1h-1zM4 8h1v1h-1zM7 8h2v1h-2zM4 9h1v1h-1zM7 9h1v1h-1zM4 10h1v1h-1zM7 10h1v1h-1zM4 11h1v1h-1zM7 11h1v1h-1zM0 12h11v1h-11z"/><path id="g112" d="M9 1h1v1h-1zM8 2h1v1h-1zM8 3h1v1h-1zM7 4h1v1h-1zM7 5h1v1h-1zM7 6h1v1h-1zM7 7h1v1h-1zM7 8h1v1h-1zM7 9h1v1h-1zM8 10h1v1h-1zM8 11h1v1h-1zM9 12h1v1h-1z"/><path id="g113" d="M3 1h1v1h-1zM4 2h1v1h-1zM4 3h1v1h-1zM5 4h1v1h-1zM5 5h1v1h-1zM5 6h1v1h-1zM5 7h1v1h-1zM5 8h1v1h-1zM5 9h1v1h-1zM4 10h1v1h-1zM4 11h1v1h-1zM3 12h1v1h-1z"/><path id="g114" d="M7 2h3v1h-3zM1 3h6v1h-6zM4 4h1v1h-1zM8 4h1v1h-1zM2 5h6v1h-6zM5 6h1v1h-1zM4 7h1v1h-1zM8 7h1v1h-1zM1 8h9v1h-9zM5 9h1v1h-1zM9 9h1v1h-1zM3 10h1v1h-1zM5 10h1v1h-1zM7 10h1v1h-1zM2 11h1v1h-1zM5 11h1v1h-1zM8 11h1v1h-1zM1 12h1v1h-1zM4 12h2v1h-2zM9 12h1v1h-1z"/><path id="g115" d="M2 2h1v1h-1zM7 2h1v1h-1zM2 3h1v1h-1zM4 3h7v1h-7zM1 4h1v1h-1zM6 4h1v1h-1zM1 5h1v1h-1zM3 5h1v1h-1zM5 5h1v1h-1zM9 5h1v1h-1zM0 6h3v1h-3zM4 6h7v1h-7zM2 7h1v1h-1zM6 7h1v1h-1zM8 7h1v1h-1zM10 7h1v1h-1zM1 8h1v1h-1zM6 8h1v1h-1zM8 8h1v1h-1zM0 9h4v1h-4zM6 9h1v1h-1zM8 9h1v1h-1zM6 10h1v1h-1zM8 10h1v1h-1zM10 10h1v1h-1zM2 11h2v1h-2zM5 11h1v1h-1zM8 11h1v1h-1zM10 11h1v1h-1zM0 12h2v1h-2zM4 12h1v1h-1zM8 12h3v1h-3z"/><path id="g116" d="M5 2h1v1h-1zM0 3h11v1h-11zM0 4h1v1h-1zM8 4h1v1h-1zM10 4h1v1h-1zM0 5h1v1h-1zM3 5h5v1h-5zM10 5h1v1h-1zM3 6h1v1h-1zM3 7h7v1h-7zM3 8h1v1h-1zM7 8h1v1h-1zM3 9h1v1h-1zM7 9h1v1h-1zM0 10h11v1h-11zM3 11h1v1h-1zM7 11h1v1h-1zM0 12h3v1h-3zM8 12h3v1h-3z"/><path id="g117" d="M1 2h10v1h-10zM1 3h1v1h-1zM10 3h1v1h-1zM1 4h1v1h-1zM3 4h6v1h-6zM10 4h1v1h-1zM1 5h1v1h-1zM5 5h1v1h-1zM10 5h1v1h-1zM1 6h1v1h-1zM5 6h1v1h-1zM10 6h1v1h-1zM1 7h1v1h-1zM3 7h6v1h-6zM10 7h1v1h-1zM1 8h1v1h-1zM5 8h1v1h-1zM7 8h1v1h-1zM10 8h1v1h-1zM1 9h1v1h-1zM5 9h1v1h-1zM8 9h1v1h-1zM10 9h1v1h-1zM1 10h10v1h-10zM1 11h1v1h-1zM10 11h1v1h-1zM1 12h10v1h-10z"/><path id="g118" d="M0 2h4v1h-4zM5 2h5v1h-5zM0 3h1v1h-1zM3 3h1v1h-1zM0 4h1v1h-1zM2 4h1v1h-1zM0 5h2v1h-2zM4 5h7v1h-7zM0 6h1v1h-1zM2 6h1v1h-1zM7 6h1v1h-1zM0 7h1v1h-1zM3 7h1v1h-1zM5 7h1v1h-1zM7 7h1v1h-1zM9 7h1v1h-1zM0 8h1v1h-1zM3 8h1v1h-1zM5 8h1v1h-1zM7 8h1v1h-1zM9 8h1v1h-1zM0 9h2v1h-2zM3 9h1v1h-1zM5 9h1v1h-1zM7 9h1v1h-1zM10 9h1v1h-1zM0 10h1v1h-1zM2 10h1v1h-1zM4 10h1v1h-1zM7 10h1v1h-1zM10 10h1v1h-1zM0 11h1v1h-1zM7 11h1v1h-1zM0 12h1v1h-1zM6 12h2v1h-2z"/><path id="g119" d="M2 2h7v1h-7zM2 3h1v1h-1zM8 3h1v1h-1zM2 4h1v1h-1zM8 4h1v1h-1zM2 5h7v1h-7zM2 7h8v1h-8zM5 8h1v1h-1zM0 9h11v1h-11zM4 10h1v1h-1zM6 10h1v1h-1zM3 11h1v1h-1zM7 11h1v1h-1zM0 12h3v1h-3zM8 12h3v1h-3z"/><path id="g120" d="M1 2h1v1h-1zM7 2h1v1h-1zM2 3h1v1h-1zM5 3h1v1h-1zM7 3h1v1h-1zM0 4h1v1h-1zM5 4h1v1h-1zM7 4h1v1h-1zM1 5h1v1h-1zM3 5h1v1h-1zM5 5h1v1h-1zM7 5h3v1h-3zM3 6h1v1h-1zM5 6h3v1h-3zM9 6h1v1h-1zM2 7h1v1h-1zM4 7h2v1h-2zM7 7h1v1h-1zM9 7h1v1h-1zM2 8h1v1h-1zM5 8h1v1h-1zM7 8h1v1h-1zM9 8h1v1h-1zM0 9h2v1h-2zM5 9h1v1h-1zM7 9h3v1h-3zM1 10h1v1h-1zM5 10h1v1h-1zM7 10h1v1h-1zM10 10h1v1h-1zM1 11h1v1h-1zM5 11h1v1h-1zM10 11h1v1h-1zM1 12h1v1h-1zM6 12h5v1h-5z"/><path id="g121" d="M7 2h1v1h-1zM7 3h1v1h-1zM0 4h5v1h-5zM7 4h1v1h-1zM2 5h1v1h-1zM5 5h6v1h-6zM2 6h1v1h-1zM7 6h1v1h-1zM10 6h1v1h-1zM2 7h1v1h-1zM7 7h1v1h-1zM10 7h1v1h-1zM2 8h1v1h-1zM7 8h1v1h-1zM10 8h1v1h-1zM2 9h3v1h-3zM6 9h1v1h-1zM10 9h1v1h-1zM0 10h2v1h-2zM6 10h1v1h-1zM10 10h1v1h-1zM5 11h1v1h-1zM10 11h1v1h-1zM3 12h2v1h-2zM8 12h2v1h-2z"/><path id="g122" d="M5 2h1v1h-1zM4 3h1v1h-1zM6 3h1v1h-1zM3 4h1v1h-1zM7 4h1v1h-1zM2 5h1v1h-1zM8 5h1v1h-1zM0 6h2v1h-2zM3 6h5v1h-5zM9 6h2v1h-2zM5 7h1v1h-1zM5 8h1v1h-1zM3 9h5v1h-5zM5 10h1v1h-1zM5 11h1v1h-1zM1 12h9v1h-9z"/><path id="g123" d="M1 2h1v1h-1zM7 2h1v1h-1zM2 3h8v1h-8zM0 4h1v1h-1zM4 4h1v1h-1zM6 4h1v1h-1zM9 4h1v1h-1zM1 5h1v1h-1zM4 5h1v1h-1zM6 5h2v1h-2zM9 5h1v1h-1zM2 6h1v1h-1zM4 6h1v1h-1zM6 6h1v1h-1zM8 6h2v1h-2zM2 7h1v1h-1zM4 7h1v1h-1zM6 7h1v1h-1zM8 7h1v1h-1zM2 8h1v1h-1zM4 8h7v1h-7zM0 9h2v1h-2zM3 9h2v1h-2zM10 9h1v1h-1zM1 10h1v1h-1zM5 10h4v1h-4zM10 10h1v1h-1zM1 11h1v1h-1zM10 11h1v1h-1zM1 12h1v1h-1zM8 12h2v1h-2z"/><path id="g124" d="M0 3h11v1h-11zM4 4h1v1h-1zM6 4h1v1h-1zM9 4h1v1h-1zM1 5h1v1h-1zM4 5h1v1h-1zM6 5h1v1h-1zM9 5h1v1h-1zM2 6h1v1h-1zM4 6h1v1h-1zM6 6h1v1h-1zM9 6h1v1h-1zM3 7h1v1h-1zM7 7h1v1h-1zM9 7h1v1h-1zM3 8h1v1h-1zM7 8h1v1h-1zM9 8h1v1h-1zM2 9h1v1h-1zM4 9h1v1h-1zM8 9h1v1h-1zM1 10h1v1h-1zM5 10h1v1h-1zM7 10h2v1h-2zM0 11h1v1h-1zM6 11h1v1h-1zM9 11h1v1h-1zM5 12h1v1h-1zM10 12h1v1h-1z"/><path id="g125" d="M5 2h1v1h-1zM5 3h1v1h-1zM5 4h1v1h-1zM0 5h11v1h-11zM5 6h1v1h-1zM4 7h3v1h-3zM3 8h1v1h-1zM5 8h1v1h-1zM7 8h1v1h-1zM2 9h1v1h-1zM5 9h1v1h-1zM8 9h1v1h-1zM0 10h2v1h-2zM5 10h1v1h-1zM9 10h2v1h-2zM5 11h1v1h-1zM9 11h1v1h-1zM5 12h1v1h-1z"/><path id="g126" d="M2 2h1v1h-1zM8 2h1v1h-1zM0 3h5v1h-5zM6 3h5v1h-5zM1 4h1v1h-1zM3 4h1v1h-1zM7 4h1v1h-1zM9 4h1v1h-1zM0 5h11v1h-11zM0 7h5v1h-5zM6 7h5v1h-5zM0 8h1v1h-1zM4 8h1v1h-1zM6 8h1v1h-1zM10 8h1v1h-1zM0 9h5v1h-5zM6 9h5v1h-5zM2 10h1v1h-1zM7 10h2v1h-2zM1 11h2v1h-2zM4 11h1v1h-1zM6 11h1v1h-1zM8 11h1v1h-1zM10 11h1v1h-1zM0 12h1v1h-1zM2 12h2v1h-2zM5 12h1v1h-1zM8 12h3v1h-3z"/><path id="g127" d="M2 2h1v1h-1zM7 2h2v1h-2zM0 3h5v1h-5zM6 3h1v1h-1zM9 3h1v1h-1zM2 4h1v1h-1zM5 4h1v1h-1zM10 4h1v1h-1zM0 5h4v1h-4zM0 6h1v1h-1zM3 6h1v1h-1zM5 6h6v1h-6zM0 7h5v1h-5zM7 7h1v1h-1zM10 7h1v1h-1zM0 8h1v1h-1zM3 8h1v1h-1zM5 8h1v1h-1zM7 8h2v1h-2zM10 8h1v1h-1zM0 9h4v1h-4zM6 9h2v1h-2zM9 9h2v1h-2zM2 10h1v1h-1zM5 10h1v1h-1zM7 10h2v1h-2zM10 10h1v1h-1zM0 11h5v1h-5zM7 11h1v1h-1zM10 11h1v1h-1zM2 12h1v1h-1zM6 12h2v1h-2zM9 12h2v1h-2z"/><path id="g128" d="M6 2h1v1h-1zM1 3h10v1h-10zM1 4h1v1h-1zM3 4h1v1h-1zM10 4h1v1h-1zM0 5h1v1h-1zM4 5h1v1h-1zM6 5h1v1h-1zM9 5h1v1h-1zM2 6h1v1h-1zM6 6h1v1h-1zM3 7h1v1h-1zM6 7h1v1h-1zM1 8h10v1h-10zM6 9h1v1h-1zM5 10h1v1h-1zM7 10h1v1h-1zM4 11h1v1h-1zM8 11h1v1h-1zM1 12h3v1h-3zM9 12h2v1h-2z"/><path id="g129" d="M0 2h6v1h-6zM7 2h1v1h-1zM1 3h1v1h-1zM4 3h1v1h-1zM6 3h4v1h-4zM0 4h3v1h-3zM4 4h3v1h-3zM9 4h1v1h-1zM0 5h1v1h-1zM2 5h1v1h-1zM4 5h1v1h-1zM6 5h2v1h-2zM9 5h1v1h-1zM0 6h3v1h-3zM4 6h3v1h-3zM8 6h2v1h-2zM1 7h1v1h-1zM3 7h1v1h-1zM6 7h1v1h-1zM1 8h10v1h-10zM0 9h2v1h-2zM3 9h1v1h-1zM10 9h1v1h-1zM1 10h8v1h-8zM10 10h1v1h-1zM1 11h1v1h-1zM3 11h1v1h-1zM10 11h1v1h-1zM1 12h6v1h-6zM9 12h2v1h-2z"/><path id="g130" d="M7 2h1v1h-1zM0 3h4v1h-4zM5 3h5v1h-5zM3 4h1v1h-1zM5 4h1v1h-1zM9 4h1v1h-1zM0 5h1v1h-1zM3 5h1v1h-1zM5 5h1v1h-1zM7 5h1v1h-1zM9 5h1v1h-1zM1 6h1v1h-1zM3 6h1v1h-1zM5 6h1v1h-1zM7 6h1v1h-1zM9 6h1v1h-1zM2 7h1v1h-1zM5 7h1v1h-1zM8 7h1v1h-1zM2 8h1v1h-1zM5 8h6v1h-6zM1 9h1v1h-1zM3 9h1v1h-1zM10 9h1v1h-1zM1 10h1v1h-1zM4 10h5v1h-5zM10 10h1v1h-1zM0 11h1v1h-1zM10 11h1v1h-1zM8 12h2v1h-2z"/><path id="g131" d="M1 2h1v1h-1zM7 2h1v1h-1zM1 3h1v1h-1zM4 3h7v1h-7zM1 4h3v1h-3zM7 4h1v1h-1zM0 5h1v1h-1zM5 5h5v1h-5zM0 6h6v1h-6zM9 6h1v1h-1zM2 7h1v1h-1zM5 7h3v1h-3zM9 7h1v1h-1zM0 8h6v1h-6zM7 8h3v1h-3zM2 9h1v1h-1zM5 9h1v1h-1zM9 9h1v1h-1zM2 10h1v1h-1zM4 10h7v1h-7zM2 11h2v1h-2zM6 11h1v1h-1zM8 11h1v1h-1zM2 12h1v1h-1zM4 12h2v1h-2zM9 12h2v1h-2z"/><path id="g132" d="M3 2h1v1h-1zM9 2h2v1h-2zM0 3h6v1h-6zM7 3h2v1h-2zM1 4h1v1h-1zM5 4h1v1h-1zM7 4h1v1h-1zM2 5h1v1h-1zM4 5h1v1h-1zM7 5h1v1h-1zM0 6h6v1h-6zM7 6h4v1h-4zM3 7h1v1h-1zM7 7h1v1h-1zM9 7h1v1h-1zM0 8h6v1h-6zM7 8h1v1h-1zM9 8h1v1h-1zM3 9h1v1h-1zM7 9h1v1h-1zM9 9h1v1h-1zM1 10h1v1h-1zM3 10h1v1h-1zM5 10h1v1h-1zM7 10h1v1h-1zM9 10h1v1h-1zM0 11h1v1h-1zM3 11h1v1h-1zM6 11h1v1h-1zM9 11h1v1h-1zM2 12h2v1h-2zM5 12h1v1h-1zM9 12h1v1h-1z"/><path id="g133" d="M1 2h9v1h-9zM1 3h1v1h-1zM1 4h1v1h-1zM3 4h1v1h-1zM8 4h1v1h-1zM1 5h1v1h-1zM4 5h1v1h-1zM8 5h1v1h-1zM1 6h1v1h-1zM5 6h1v1h-1zM7 6h1v1h-1zM1 7h1v1h-1zM6 7h1v1h-1zM1 8h1v1h-1zM5 8h1v1h-1zM7 8h1v1h-1zM1 9h1v1h-1zM4 9h1v1h-1zM8 9h1v1h-1zM1 10h1v1h-1zM3 10h1v1h-1zM8 10h1v1h-1zM1 11h1v1h-1zM1 12h10v1h-10z"/><path id="g134" d="M5 2h1v1h-1zM6 3h1v1h-1zM2 4h4v1h-4zM9 4h1v1h-1zM5 5h1v1h-1zM8 5h1v1h-1zM0 6h4v1h-4zM5 6h1v1h-1zM7 6h1v1h-1zM3 7h1v1h-1zM5 7h2v1h-2zM2 8h1v1h-1zM5 8h1v1h-1zM7 8h1v1h-1zM2 9h1v1h-1zM5 9h1v1h-1zM8 9h1v1h-1zM1 10h1v1h-1zM5 10h1v1h-1zM9 10h2v1h-2zM0 11h1v1h-1zM3 11h1v1h-1zM5 11h1v1h-1zM4 12h1v1h-1z"/><path id="g135" d="M6 2h1v1h-1zM1 3h10v1h-10zM1 4h1v1h-1zM6 4h1v1h-1zM1 5h1v1h-1zM3 5h7v1h-7zM1 6h1v1h-1zM6 6h1v1h-1zM9 6h1v1h-1zM1 7h10v1h-10zM1 8h1v1h-1zM6 8h1v1h-1zM9 8h1v1h-1zM1 9h1v1h-1zM3 9h7v1h-7zM1 10h1v1h-1zM3 10h1v1h-1zM6 10h1v1h-1zM9 10h1v1h-1zM0 11h1v1h-1zM4 11h1v1h-1zM6 11h1v1h-1zM8 11h1v1h-1zM0 12h1v1h-1zM2 12h2v1h-2zM5 12h2v1h-2zM9 12h2v1h-2z"/><path id="g136" d="M2 2h1v1h-1zM4 2h1v1h-1zM7 2h1v1h-1zM1 3h5v1h-5zM7 3h1v1h-1zM2 4h1v1h-1zM4 4h1v1h-1zM7 4h4v1h-4zM0 5h8v1h-8zM9 5h1v1h-1zM1 6h1v1h-1zM4 6h1v1h-1zM7 6h1v1h-1zM9 6h1v1h-1zM1 7h4v1h-4zM7 7h1v1h-1zM9 7h1v1h-1zM1 8h1v1h-1zM4 8h1v1h-1zM7 8h1v1h-1zM9 8h1v1h-1zM1 9h4v1h-4zM7 9h1v1h-1zM9 9h1v1h-1zM1 10h1v1h-1zM4 10h1v1h-1zM8 10h1v1h-1zM1 11h1v1h-1zM4 11h1v1h-1zM7 11h1v1h-1zM9 11h1v1h-1zM1 12h1v1h-1zM3 12h2v1h-2zM6 12h1v1h-1zM10 12h1v1h-1z"/><path id="g137" d="M2 2h1v1h-1zM6 2h1v1h-1zM0 3h4v1h-4zM5 3h4v1h-4zM2 4h1v1h-1zM6 4h1v1h-1zM8 4h1v1h-1zM2 5h2v1h-2zM6 5h1v1h-1zM8 5h1v1h-1zM1 6h2v1h-2zM5 6h2v1h-2zM8 6h1v1h-1zM0 7h1v1h-1zM2 7h1v1h-1zM6 7h3v1h-3zM2 8h1v1h-1zM5 8h1v1h-1zM8 8h1v1h-1zM10 8h1v1h-1zM1 9h2v1h-2zM4 9h1v1h-1zM9 9h2v1h-2zM1 11h1v1h-1zM3 11h1v1h-1zM6 11h1v1h-1zM9 11h1v1h-1zM0 12h1v1h-1zM4 12h1v1h-1zM7 12h1v1h-1zM10 12h1v1h-1z"/><path id="g138" d="M6 2h1v1h-1zM0 3h3v1h-3zM4 3h6v1h-6zM2 4h1v1h-1zM6 4h1v1h-1zM9 4h1v1h-1zM1 5h1v1h-1zM3 5h8v1h-8zM0 6h3v1h-3zM6 6h1v1h-1zM9 6h1v1h-1zM2 7h1v1h-1zM4 7h6v1h-6zM0 8h1v1h-1zM2 8h1v1h-1zM6 8h1v1h-1zM1 9h2v1h-2zM4 9h7v1h-7zM2 10h1v1h-1zM6 10h1v1h-1zM1 11h1v1h-1zM3 11h1v1h-1zM6 11h1v1h-1zM0 12h1v1h-1zM4 12h7v1h-7z"/><path id="g139" d="M5 2h1v1h-1zM3 3h1v1h-1zM5 3h1v1h-1zM8 3h1v1h-1zM2 4h1v1h-1zM5 4h1v1h-1zM7 4h1v1h-1zM9 4h2v1h-2zM1 5h1v1h-1zM5 5h2v1h-2zM10 5h1v1h-1zM3 6h6v1h-6zM2 7h2v1h-2zM8 7h1v1h-1zM0 8h2v1h-2zM3 8h6v1h-6zM3 9h1v1h-1zM8 9h1v1h-1zM3 10h6v1h-6zM3 11h1v1h-1zM8 11h1v1h-1zM3 12h6v1h-6z"/><path id="g140" d="M2 2h1v1h-1zM5 2h6v1h-6zM3 3h1v1h-1zM10 3h1v1h-1zM1 4h1v1h-1zM5 4h1v1h-1zM10 4h1v1h-1zM1 5h1v1h-1zM3 5h6v1h-6zM10 5h1v1h-1zM1 6h1v1h-1zM3 6h1v1h-1zM5 6h1v1h-1zM8 6h1v1h-1zM10 6h1v1h-1zM1 7h1v1h-1zM3 7h1v1h-1zM5 7h1v1h-1zM8 7h1v1h-1zM10 7h1v1h-1zM1 8h1v1h-1zM3 8h6v1h-6zM10 8h1v1h-1zM1 9h1v1h-1zM5 9h1v1h-1zM10 9h1v1h-1zM1 10h1v1h-1zM5 10h1v1h-1zM8 10h1v1h-1zM10 10h1v1h-1zM1 11h1v1h-1zM3 11h6v1h-6zM10 11h1v1h-1zM1 12h1v1h-1zM9 12h2v1h-2z"/><path id="g141" d="M3 2h1v1h-1zM6 2h1v1h-1zM9 2h1v1h-1zM2 3h1v1h-1zM6 3h1v1h-1zM8 3h1v1h-1zM1 4h2v1h-2zM6 4h2v1h-2zM0 5h1v1h-1zM2 5h1v1h-1zM4 5h3v1h-3zM10 5h1v1h-1zM2 6h1v1h-1zM6 6h1v1h-1zM10 6h1v1h-1zM2 7h1v1h-1zM7 7h4v1h-4zM5 8h1v1h-1zM0 9h11v1h-11zM5 10h1v1h-1zM5 11h1v1h-1zM5 12h1v1h-1z"/><path id="g142" d="M1 2h4v1h-4zM6 2h5v1h-5zM1 3h1v1h-1zM4 3h1v1h-1zM8 3h1v1h-1zM1 4h4v1h-4zM6 4h5v1h-5zM1 5h1v1h-1zM4 5h1v1h-1zM6 5h1v1h-1zM10 5h1v1h-1zM1 6h4v1h-4zM6 6h1v1h-1zM8 6h1v1h-1zM10 6h1v1h-1zM2 7h1v1h-1zM6 7h1v1h-1zM8 7h1v1h-1zM10 7h1v1h-1zM0 8h7v1h-7zM8 8h1v1h-1zM10 8h1v1h-1zM1 9h1v1h-1zM4 9h1v1h-1zM6 9h1v1h-1zM8 9h1v1h-1zM10 9h1v1h-1zM1 10h4v1h-4zM6 10h1v1h-1zM8 10h1v1h-1zM10 10h1v1h-1zM1 11h1v1h-1zM3 11h1v1h-1zM5 11h1v1h-1zM7 11h1v1h-1zM9 11h1v1h-1zM0 12h1v1h-1zM2 12h2v1h-2zM5 12h2v1h-2zM10 12h1v1h-1z"/><path id="g143" d="M2 2h1v1h-1zM6 2h1v1h-1zM1 3h1v1h-1zM3 3h8v1h-8zM0 4h1v1h-1zM6 4h1v1h-1zM2 5h8v1h-8zM1 6h1v1h-1zM3 6h1v1h-1zM5 6h1v1h-1zM7 6h1v1h-1zM9 6h1v1h-1zM0 7h2v1h-2zM3 7h7v1h-7zM1 8h1v1h-1zM1 9h10v1h-10zM1 10h1v1h-1zM4 10h1v1h-1zM6 10h1v1h-1zM9 10h1v1h-1zM1 11h1v1h-1zM3 11h2v1h-2zM8 11h1v1h-1zM10 11h1v1h-1zM1 12h2v1h-2zM4 12h5v1h-5z"/><path id="g144" d="M2 2h1v1h-1zM6 2h1v1h-1zM0 3h1v1h-1zM2 3h1v1h-1zM6 3h1v1h-1zM0 4h1v1h-1zM2 4h1v1h-1zM5 4h6v1h-6zM0 5h5v1h-5zM6 5h1v1h-1zM8 5h1v1h-1zM10 5h1v1h-1zM0 6h1v1h-1zM2 6h1v1h-1zM6 6h1v1h-1zM8 6h1v1h-1zM10 6h1v1h-1zM2 7h2v1h-2zM6 7h1v1h-1zM8 7h1v1h-1zM10 7h1v1h-1zM1 8h2v1h-2zM5 8h1v1h-1zM8 8h1v1h-1zM10 8h1v1h-1zM0 9h1v1h-1zM2 9h1v1h-1zM4 9h1v1h-1zM7 9h1v1h-1zM10 9h1v1h-1zM2 10h1v1h-1zM6 10h1v1h-1zM10 10h1v1h-1zM2 11h1v1h-1zM5 11h1v1h-1zM7 11h1v1h-1zM10 11h1v1h-1zM2 12h1v1h-1zM4 12h1v1h-1zM8 12h2v1h-2z"/><path id="g145" d="M0 2h6v1h-6zM9 2h1v1h-1zM1 3h1v1h-1zM3 3h1v1h-1zM6 3h1v1h-1zM8 3h1v1h-1zM1 4h1v1h-1zM3 4h1v1h-1zM5 4h6v1h-6zM1 5h3v1h-3zM7 5h1v1h-1zM1 6h1v1h-1zM3 6h1v1h-1zM7 6h1v1h-1zM1 7h10v1h-10zM1 8h1v1h-1zM3 8h1v1h-1zM7 8h1v1h-1zM1 9h1v1h-1zM3 9h1v1h-1zM7 9h1v1h-1zM0 10h5v1h-5zM6 10h1v1h-1zM8 10h1v1h-1zM3 11h1v1h-1zM5 11h1v1h-1zM9 11h1v1h-1zM3 12h2v1h-2zM10 12h1v1h-1z"/><path id="g146" d="M1 2h1v1h-1zM4 2h7v1h-7zM2 3h1v1h-1zM4 3h1v1h-1zM10 3h1v1h-1zM5 4h1v1h-1zM8 4h1v1h-1zM0 5h1v1h-1zM4 5h1v1h-1zM7 5h1v1h-1zM9 5h1v1h-1zM1 6h1v1h-1zM7 6h1v1h-1zM2 7h1v1h-1zM4 7h7v1h-7zM2 8h1v1h-1zM7 8h1v1h-1zM0 9h2v1h-2zM6 9h3v1h-3zM1 10h1v1h-1zM5 10h1v1h-1zM7 10h1v1h-1zM9 10h1v1h-1zM1 11h1v1h-1zM3 11h2v1h-2zM7 11h1v1h-1zM10 11h1v1h-1zM1 12h1v1h-1zM7 12h1v1h-1z"/><path id="g147" d="M2 2h1v1h-1zM5 2h1v1h-1zM10 2h1v1h-1zM2 3h1v1h-1zM5 3h1v1h-1zM7 3h1v1h-1zM10 3h1v1h-1zM2 4h1v1h-1zM5 4h1v1h-1zM7 4h1v1h-1zM10 4h1v1h-1zM0 5h6v1h-6zM7 5h1v1h-1zM10 5h1v1h-1zM2 6h1v1h-1zM5 6h1v1h-1zM7 6h1v1h-1zM10 6h1v1h-1zM2 7h1v1h-1zM5 7h1v1h-1zM7 7h1v1h-1zM10 7h1v1h-1zM2 8h1v1h-1zM5 8h1v1h-1zM7 8h1v1h-1zM10 8h1v1h-1zM2 9h4v1h-4zM7 9h1v1h-1zM10 9h1v1h-1zM0 10h2v1h-2zM4 10h1v1h-1zM7 10h1v1h-1zM10 10h1v1h-1zM3 11h1v1h-1zM10 11h1v1h-1zM2 12h1v1h-1zM10 12h1v1h-1z"/><path id="g148" d="M3 2h1v1h-1zM7 2h1v1h-1zM0 3h11v1h-11zM3 4h1v1h-1zM5 4h1v1h-1zM7 4h1v1h-1zM1 5h9v1h-9zM5 6h1v1h-1zM0 7h11v1h-11zM2 8h1v1h-1zM4 8h1v1h-1zM8 8h1v1h-1zM0 9h2v1h-2zM3 9h5v1h-5zM9 9h2v1h-2zM2 10h1v1h-1zM4 10h1v1h-1zM7 10h1v1h-1zM5 11h2v1h-2zM0 12h5v1h-5zM7 12h4v1h-4z"/><path id="g149" d="M6 2h5v1h-5zM0 3h4v1h-4zM6 3h1v1h-1zM10 3h1v1h-1zM0 4h1v1h-1zM3 4h1v1h-1zM6 4h1v1h-1zM10 4h1v1h-1zM0 5h1v1h-1zM3 5h1v1h-1zM6 5h5v1h-5zM0 6h4v1h-4zM6 6h1v1h-1zM10 6h1v1h-1zM0 7h1v1h-1zM3 7h1v1h-1zM6 7h1v1h-1zM10 7h1v1h-1zM0 8h1v1h-1zM3 8h1v1h-1zM6 8h5v1h-5zM0 9h4v1h-4zM6 9h1v1h-1zM10 9h1v1h-1zM5 10h1v1h-1zM10 10h1v1h-1zM4 11h1v1h-1zM8 11h1v1h-1zM10 11h1v1h-1zM2 12h2v1h-2zM9 12h1v1h-1z"/><path id="g150" d="M2 2h1v1h-1zM2 3h1v1h-1zM5 3h6v1h-6zM1 4h1v1h-1zM5 4h1v1h-1zM8 4h1v1h-1zM10 4h1v1h-1zM1 5h1v1h-1zM3 5h1v1h-1zM5 5h1v1h-1zM8 5h1v1h-1zM10 5h1v1h-1zM0 6h3v1h-3zM5 6h1v1h-1zM8 6h1v1h-1zM10 6h1v1h-1zM2 7h1v1h-1zM5 7h6v1h-6zM1 8h1v1h-1zM5 8h1v1h-1zM8 8h1v1h-1zM10 8h1v1h-1zM0 9h4v1h-4zM5 9h1v1h-1zM8 9h1v1h-1zM10 9h1v1h-1zM5 10h1v1h-1zM8 10h1v1h-1zM10 10h1v1h-1zM2 11h2v1h-2zM5 11h6v1h-6zM0 12h2v1h-2zM5 12h1v1h-1zM10 12h1v1h-1z"/><path id="g151" d="M2 2h1v1h-1zM5 2h1v1h-1zM8 2h1v1h-1zM2 3h1v1h-1zM5 3h1v1h-1zM9 3h1v1h-1zM1 4h1v1h-1zM5 4h1v1h-1zM1 5h10v1h-10zM4 6h1v1h-1zM4 7h5v1h-5zM4 8h1v1h-1zM8 8h1v1h-1zM3 9h1v1h-1zM5 9h1v1h-1zM7 9h1v1h-1zM2 10h1v1h-1zM6 10h1v1h-1zM1 11h1v1h-1zM5 11h1v1h-1zM7 11h2v1h-2zM0 12h1v1h-1zM3 12h2v1h-2zM9 12h2v1h-2z"/><path id="g152" d="M1 2h1v1h-1zM6 2h1v1h-1zM2 3h1v1h-1zM7 3h1v1h-1zM0 4h1v1h-1zM4 4h7v1h-7zM1 5h1v1h-1zM3 5h1v1h-1zM7 5h1v1h-1zM3 6h1v1h-1zM7 6h1v1h-1zM2 7h1v1h-1zM7 7h1v1h-1zM2 8h1v1h-1zM5 8h5v1h-5zM0 9h2v1h-2zM7 9h1v1h-1zM1 10h1v1h-1zM7 10h1v1h-1zM1 11h1v1h-1zM7 11h1v1h-1zM1 12h1v1h-1zM4 12h7v1h-7z"/><path id="g153" d="M3 2h1v1h-1zM7 2h2v1h-2zM0 3h1v1h-1zM3 3h1v1h-1zM7 3h1v1h-1zM9 3h1v1h-1zM1 4h1v1h-1zM3 4h1v1h-1zM7 4h1v1h-1zM1 5h1v1h-1zM3 5h8v1h-8zM3 6h1v1h-1zM7 6h1v1h-1zM3 7h1v1h-1zM7 7h1v1h-1zM2 8h2v1h-2zM6 8h1v1h-1zM8 8h1v1h-1zM0 9h2v1h-2zM3 9h1v1h-1zM6 9h1v1h-1zM8 9h1v1h-1zM3 10h1v1h-1zM5 10h1v1h-1zM9 10h1v1h-1zM3 11h1v1h-1zM5 11h1v1h-1zM9 11h1v1h-1zM3 12h2v1h-2zM10 12h1v1h-1z"/><path id="g154" d="M5 2h1v1h-1zM0 3h11v1h-11zM5 4h1v1h-1zM4 5h1v1h-1zM6 5h1v1h-1zM2 6h3v1h-3zM7 6h2v1h-2zM0 7h2v1h-2zM5 7h1v1h-1zM9 7h2v1h-2zM3 9h1v1h-1zM5 9h1v1h-1zM9 9h1v1h-1zM1 10h1v1h-1zM3 10h1v1h-1zM6 10h1v1h-1zM8 10h1v1h-1zM10 10h1v1h-1zM1 11h1v1h-1zM3 11h1v1h-1zM8 11h1v1h-1zM10 11h1v1h-1zM0 12h1v1h-1zM4 12h5v1h-5z"/><path id="g155" d="M5 2h1v1h-1zM0 3h11v1h-11zM0 4h1v1h-1zM5 4h1v1h-1zM10 4h1v1h-1zM1 5h9v1h-9zM1 6h1v1h-1zM5 6h1v1h-1zM9 6h1v1h-1zM1 7h9v1h-9zM1 8h1v1h-1zM5 8h1v1h-1zM9 8h1v1h-1zM1 9h9v1h-9zM1 10h1v1h-1zM5 10h1v1h-1zM9 10h1v1h-1zM5 11h1v1h-1zM5 12h1v1h-1z"/><path id="g156" d="M2 2h1v1h-1zM7 2h1v1h-1zM2 3h1v1h-1zM8 3h1v1h-1zM0 4h11v1h-11zM2 5h1v1h-1zM7 5h1v1h-1zM2 6h1v1h-1zM6 6h1v1h-1zM9 6h1v1h-1zM1 7h3v1h-3zM5 7h4v1h-4zM1 8h2v1h-2zM4 8h1v1h-1zM7 8h1v1h-1zM10 8h1v1h-1zM0 9h1v1h-1zM2 9h1v1h-1zM6 9h1v1h-1zM9 9h1v1h-1zM2 10h1v1h-1zM5 10h1v1h-1zM8 10h1v1h-1zM2 11h1v1h-1zM7 11h1v1h-1zM9 11h1v1h-1zM2 12h1v1h-1zM4 12h3v1h-3zM10 12h1v1h-1z"/><path id="g157" d="M1 2h1v1h-1zM7 2h1v1h-1zM2 3h1v1h-1zM7 3h1v1h-1zM7 4h1v1h-1zM4 5h7v1h-7zM0 6h3v1h-3zM7 6h1v1h-1zM2 7h1v1h-1zM7 7h1v1h-1zM2 8h1v1h-1zM7 8h1v1h-1zM2 9h1v1h-1zM4 9h1v1h-1zM7 9h1v1h-1zM2 10h2v1h-2zM7 10h1v1h-1zM2 11h1v1h-1zM7 11h1v1h-1zM7 12h1v1h-1z"/></defs><g fill="#000"><use href="#g0" x="3" y="5"/><use href="#g1" x="15" y="5"/><use href="#g2" x="27" y="5"/><use href="#g3" x="39" y="5"/><use href="#g4" x="105" y="5"/><use href="#g5" x="117" y="5"/><use href="#g6" x="129" y="5"/><use href="#g7" x="141" y="5"/><use href="#g8" x="153" y="5"/><use href="#g9" x="25" y="68"/><use href="#g10" x="37" y="68"/><use href="#g11" x="49" y="68"/><use href="#g12" x="61" y="68"/><use href="#g9" x="25" y="91"/><use href="#g4" x="37" y="91"/><use href="#g5" x="49" y="91"/><use href="#g13" x="61" y="91"/><use href="#g9" x="304" y="68"/><use href="#g14" x="316" y="68"/><use href="#g15" x="328" y="68"/><use href="#g16" x="340" y="68"/><use href="#g17" x="352" y="68"/><use href="#g18" x="677" y="70"/><use href="#g19" x="689" y="70"/><use href="#g2" x="761" y="70"/><use href="#g20" x="773" y="70"/><use href="#g21" x="845" y="70"/><use href="#g22" x="857" y="70"/><use href="#g10" x="15" y="120"/><use href="#g11" x="27" y="120"/><use href="#g12" x="39" y="120"/><use href="#g23" x="51" y="120"/><use href="#g24" x="63" y="120"/><use href="#g10" x="116" y="120"/><use href="#g11" x="128" y="120"/><use href="#g12" x="140" y="120"/><use href="#g25" x="152" y="120"/><use href="#g26" x="164" y="120"/><use href="#g27" x="347" y="120"/><use href="#g28" x="359" y="120"/><use href="#g14" x="398" y="120"/><use href="#g15" x="410" y="120"/><use href="#g29" x="422" y="120"/><use href="#g30" x="434" y="120"/><use href="#g31" x="499" y="120"/><use href="#g32" x="511" y="120"/><use href="#g33" x="523" y="120"/><use href="#g29" x="535" y="120"/><use href="#g30" x="547" y="120"/><use href="#g31" x="600" y="120"/><use href="#g34" x="612" y="120"/><use href="#g35" x="624" y="120"/><use href="#g29" x="636" y="120"/><use href="#g30" x="648" y="120"/><use href="#g31" x="701" y="120"/><use href="#g36" x="713" y="120"/><use href="#g37" x="725" y="120"/><use href="#g29" x="737" y="120"/><use href="#g30" x="749" y="120"/><use href="#g38" x="119" y="142"/><use href="#g11" x="131" y="142"/><use href="#g39" x="143" y="142"/><use href="#g40" x="155" y="142"/><use href="#g41" x="167" y="142"/><use href="#g42" x="179" y="142"/><use href="#g43" x="191" y="142"/><use href="#g44" x="203" y="142"/><use href="#g45" x="215" y="142"/><use href="#g46" x="227" y="142"/><use href="#g47" x="239" y="142"/><use href="#g48" x="119" y="166"/><use href="#g49" x="131" y="166"/><use href="#g50" x="143" y="166"/><use href="#g51" x="155" y="166"/><use href="#g40" x="167" y="166"/><use href="#g52" x="179" y="166"/><use href="#g44" x="191" y="166"/><use href="#g45" x="203" y="166"/><use href="#g46" x="215" y="166"/><use href="#g47" x="227" y="166"/><use href="#g53" x="119" y="190"/><use href="#g54" x="131" y="190"/><use href="#g55" x="143" y="190"/><use href="#g56" x="155" y="190"/><use href="#g40" x="167" y="190"/><use href="#g52" x="179" y="190"/><use href="#g44" x="191" y="190"/><use href="#g45" x="203" y="190"/><use href="#g46" x="215" y="190"/><use href="#g47" x="227" y="190"/><use href="#g57" x="119" y="214"/><use href="#g58" x="131" y="214"/><use href="#g59" x="143" y="214"/><use href="#g60" x="155" y="214"/><use href="#g61" x="167" y="214"/><use href="#g40" x="179" y="214"/><use href="#g52" x="191" y="214"/><use href="#g62" x="203" y="214"/><use href="#g63" x="215" y="214"/><use href="#g64" x="227" y="214"/><use href="#g65" x="239" y="214"/><use href="#g44" x="251" y="214"/><use href="#g45" x="263" y="214"/><use href="#g46" x="275" y="214"/><use href="#g47" x="287" y="214"/><use href="#g66" x="119" y="238"/><use href="#g67" x="131" y="238"/><use href="#g68" x="143" y="238"/><use href="#g69" x="155" y="238"/><use href="#g51" x="167" y="238"/><use href="#g40" x="179" y="238"/><use href="#g70" x="191" y="238"/><use href="#g71" x="203" y="238"/><use href="#g72" x="215" y="238"/><use href="#g73" x="227" y="238"/><use href="#g74" x="119" y="262"/><use href="#g75" x="131" y="262"/><use href="#g76" x="143" y="262"/><use href="#g77" x="155" y="262"/><use href="#g40" x="167" y="262"/><use href="#g78" x="179" y="262"/><use href="#g44" x="191" y="262"/><use href="#g45" x="203" y="262"/><use href="#g46" x="215" y="262"/><use href="#g47" x="227" y="262"/><use href="#g79" x="119" y="286"/><use href="#g80" x="131" y="286"/><use href="#g81" x="143" y="286"/><use href="#g82" x="155" y="286"/><use href="#g40" x="167" y="286"/><use href="#g78" x="179" y="286"/><use href="#g44" x="191" y="286"/><use href="#g45" x="203" y="286"/><use href="#g46" x="215" y="286"/><use href="#g47" x="227" y="286"/><use href="#g74" x="119" y="310"/><use href="#g75" x="131" y="310"/><use href="#g48" x="143" y="310"/><use href="#g83" x="155" y="310"/><use href="#g40" x="167" y="310"/><use href="#g52" x="179" y="310"/><use href="#g62" x="191" y="310"/><use href="#g63" x="203" y="310"/><use href="#g44" x="215" y="310"/><use href="#g45" x="227" y="310"/><use href="#g46" x="239" y="310"/><use href="#g47" x="251" y="310"/><use href="#g84" x="119" y="334"/><use href="#g81" x="131" y="334"/><use href="#g85" x="143" y="334"/><use href="#g86" x="155" y="334"/><use href="#g87" x="167" y="334"/><use href="#g88" x="179" y="334"/><use href="#g89" x="191" y="334"/><use href="#g42" x="203" y="334"/><use href="#g90" x="215" y="334"/><use href="#g44" x="227" y="334"/><use href="#g45" x="239" y="334"/><use href="#g46" x="251" y="334"/><use href="#g47" x="263" y="334"/><use href="#g74" x="119" y="358"/><use href="#g75" x="131" y="358"/><use href="#g91" x="143" y="358"/><use href="#g92" x="155" y="358"/><use href="#g71" x="167" y="358"/><use href="#g73" x="179" y="358"/><use href="#g93" x="119" y="382"/><use href="#g94" x="131" y="382"/><use href="#g68" x="143" y="382"/><use href="#g95" x="155" y="382"/><use href="#g96" x="167" y="382"/><use href="#g40" x="179" y="382"/><use href="#g78" x="191" y="382"/><use href="#g62" x="203" y="382"/><use href="#g63" x="215" y="382"/><use href="#g44" x="227" y="382"/><use href="#g45" x="239" y="382"/><use href="#g46" x="251" y="382"/><use href="#g47" x="263" y="382"/><use href="#g54" x="119" y="406"/><use href="#g97" x="131" y="406"/><use href="#g98" x="143" y="406"/><use href="#g99" x="155" y="406"/><use href="#g100" x="167" y="406"/><use href="#g40" x="179" y="406"/><use href="#g78" x="191" y="406"/><use href="#g101" x="203" y="406"/><use href="#g102" x="215" y="406"/><use href="#g44" x="227" y="406"/><use href="#g45" x="239" y="406"/><use href="#g46" x="251" y="406"/><use href="#g47" x="263" y="406"/><use href="#g103" x="119" y="430"/><use href="#g67" x="131" y="430"/><use href="#g104" x="143" y="430"/><use href="#g105" x="155" y="430"/><use href="#g40" x="167" y="430"/><use href="#g106" x="179" y="430"/><use href="#g101" x="191" y="430"/><use href="#g102" x="203" y="430"/><use href="#g44" x="215" y="430"/><use href="#g45" x="227" y="430"/><use href="#g46" x="239" y="430"/><use href="#g47" x="251" y="430"/><use href="#g107" x="119" y="454"/><use href="#g108" x="131" y="454"/><use href="#g109" x="143" y="454"/><use href="#g110" x="155" y="454"/><use href="#g111" x="167" y="454"/><use href="#g112" x="179" y="454"/><use href="#g74" x="191" y="454"/><use href="#g75" x="203" y="454"/><use href="#g113" x="215" y="454"/><use href="#g40" x="227" y="454"/><use href="#g105" x="239" y="454"/><use href="#g114" x="251" y="454"/><use href="#g115" x="263" y="454"/><use href="#g44" x="275" y="454"/><use href="#g45" x="287" y="454"/><use href="#g46" x="299" y="454"/><use href="#g47" x="311" y="454"/><use href="#g97" x="119" y="478"/><use href="#g116" x="131" y="478"/><use href="#g117" x="143" y="478"/><use href="#g118" x="155" y="478"/><use href="#g112" x="167" y="478"/><use href="#g119" x="179" y="478"/><use href="#g80" x="191" y="478"/><use href="#g113" x="203" y="478"/><use href="#g40" x="215" y="478"/><use href="#g120" x="227" y="478"/><use href="#g44" x="239" y="478"/><use href="#g45" x="251" y="478"/><use href="#g46" x="263" y="478"/><use href="#g47" x="275" y="478"/><use href="#g66" x="119" y="502"/><use href="#g67" x="131" y="502"/><use href="#g121" x="143" y="502"/><use href="#g122" x="155" y="502"/><use href="#g40" x="167" y="502"/><use href="#g41" x="179" y="502"/><use href="#g44" x="191" y="502"/><use href="#g45" x="203" y="502"/><use href="#g46" x="215" y="502"/><use href="#g47" x="227" y="502"/><use href="#g74" x="119" y="526"/><use href="#g75" x="131" y="526"/><use href="#g123" x="143" y="526"/><use href="#g124" x="155" y="526"/><use href="#g125" x="167" y="526"/><use href="#g111" x="179" y="526"/><use href="#g44" x="191" y="526"/><use href="#g45" x="203" y="526"/><use href="#g46" x="215" y="526"/><use href="#g47" x="227" y="526"/><use href="#g74" x="119" y="550"/><use href="#g75" x="131" y="550"/><use href="#g126" x="143" y="550"/><use href="#g127" x="155" y="550"/><use href="#g128" x="167" y="550"/><use href="#g111" x="179" y="550"/><use href="#g44" x="191" y="550"/><use href="#g45" x="203" y="550"/><use href="#g46" x="215" y="550"/><use href="#g47" x="227" y="550"/><use href="#g74" x="119" y="574"/><use href="#g75" x="131" y="574"/><use href="#g129" x="143" y="574"/><use href="#g130" x="155" y="574"/><use href="#g40" x="167" y="574"/><use href="#g71" x="179" y="574"/><use href="#g44" x="191" y="574"/><use href="#g45" x="203" y="574"/><use href="#g46" x="215" y="574"/><use href="#g47" x="227" y="574"/><use href="#g131" x="119" y="598"/><use href="#g80" x="131" y="598"/><use href="#g132" x="143" y="598"/><use href="#g133" x="155" y="598"/><use href="#g134" x="167" y="598"/><use href="#g135" x="179" y="598"/><use href="#g40" x="191" y="598"/><use href="#g52" x="203" y="598"/><use href="#g136" x="215" y="598"/><use href="#g137" x="227" y="598"/><use href="#g71" x="239" y="598"/><use href="#g73" x="251" y="598"/><use href="#g51" x="119" y="622"/><use href="#g138" x="131" y="622"/><use href="#g139" x="143" y="622"/><use href="#g140" x="155" y="622"/><use href="#g141" x="167" y="622"/><use href="#g40" x="179" y="622"/><use href="#g105" x="191" y="622"/><use href="#g64" x="203" y="622"/><use href="#g65" x="215" y="622"/><use href="#g44" x="227" y="622"/><use href="#g45" x="239" y="622"/><use href="#g46" x="251" y="622"/><use href="#g47" x="263" y="622"/><use href="#g142" x="119" y="646"/><use href="#g143" x="131" y="646"/><use href="#g144" x="143" y="646"/><use href="#g145" x="155" y="646"/><use href="#g62" x="167" y="646"/><use href="#g63" x="179" y="646"/><use href="#g112" x="191" y="646"/><use href="#g146" x="203" y="646"/><use href="#g147" x="215" y="646"/><use href="#g113" x="227" y="646"/><use href="#g44" x="239" y="646"/><use href="#g45" x="251" y="646"/><use href="#g46" x="263" y="646"/><use href="#g47" x="275" y="646"/><use href="#g79" x="119" y="670"/><use href="#g80" x="131" y="670"/><use href="#g99" x="143" y="670"/><use href="#g148" x="155" y="670"/><use href="#g40" x="167" y="670"/><use href="#g71" x="179" y="670"/><use href="#g42" x="191" y="670"/><use href="#g43" x="203" y="670"/><use href="#g44" x="215" y="670"/><use href="#g45" x="227" y="670"/><use href="#g46" x="239" y="670"/><use href="#g47" x="251" y="670"/><use href="#g14" x="219" y="716"/><use href="#g15" x="231" y="716"/><use href="#g149" x="243" y="716"/><use href="#g150" x="255" y="716"/><use href="#g151" x="697" y="717"/><use href="#g33" x="709" y="717"/><use href="#g149" x="721" y="717"/><use href="#g150" x="733" y="717"/><use href="#g14" x="21" y="750"/><use href="#g15" x="33" y="750"/><use href="#g23" x="45" y="750"/><use href="#g24" x="57" y="750"/><use href="#g14" x="122" y="750"/><use href="#g15" x="134" y="750"/><use href="#g29" x="146" y="750"/><use href="#g30" x="158" y="750"/><use href="#g31" x="253" y="750"/><use href="#g32" x="265" y="750"/><use href="#g33" x="277" y="750"/><use href="#g29" x="289" y="750"/><use href="#g30" x="301" y="750"/><use href="#g31" x="384" y="750"/><use href="#g34" x="396" y="750"/><use href="#g35" x="408" y="750"/><use href="#g29" x="420" y="750"/><use href="#g30" x="432" y="750"/><use href="#g31" x="515" y="750"/><use href="#g36" x="527" y="750"/><use href="#g37" x="539" y="750"/><use href="#g29" x="551" y="750"/><use href="#g30" x="563" y="750"/><use href="#g102" x="646" y="750"/><use href="#g152" x="658" y="750"/><use href="#g14" x="947" y="750"/><use href="#g15" x="959" y="750"/><use href="#g153" x="971" y="750"/><use href="#g154" x="983" y="750"/><use href="#g31" x="950" y="771"/><use href="#g155" x="962" y="771"/><use href="#g156" x="974" y="771"/><use href="#g61" x="24" y="795"/><use href="#g157" x="36" y="795"/></g></svg>
</body></html>
